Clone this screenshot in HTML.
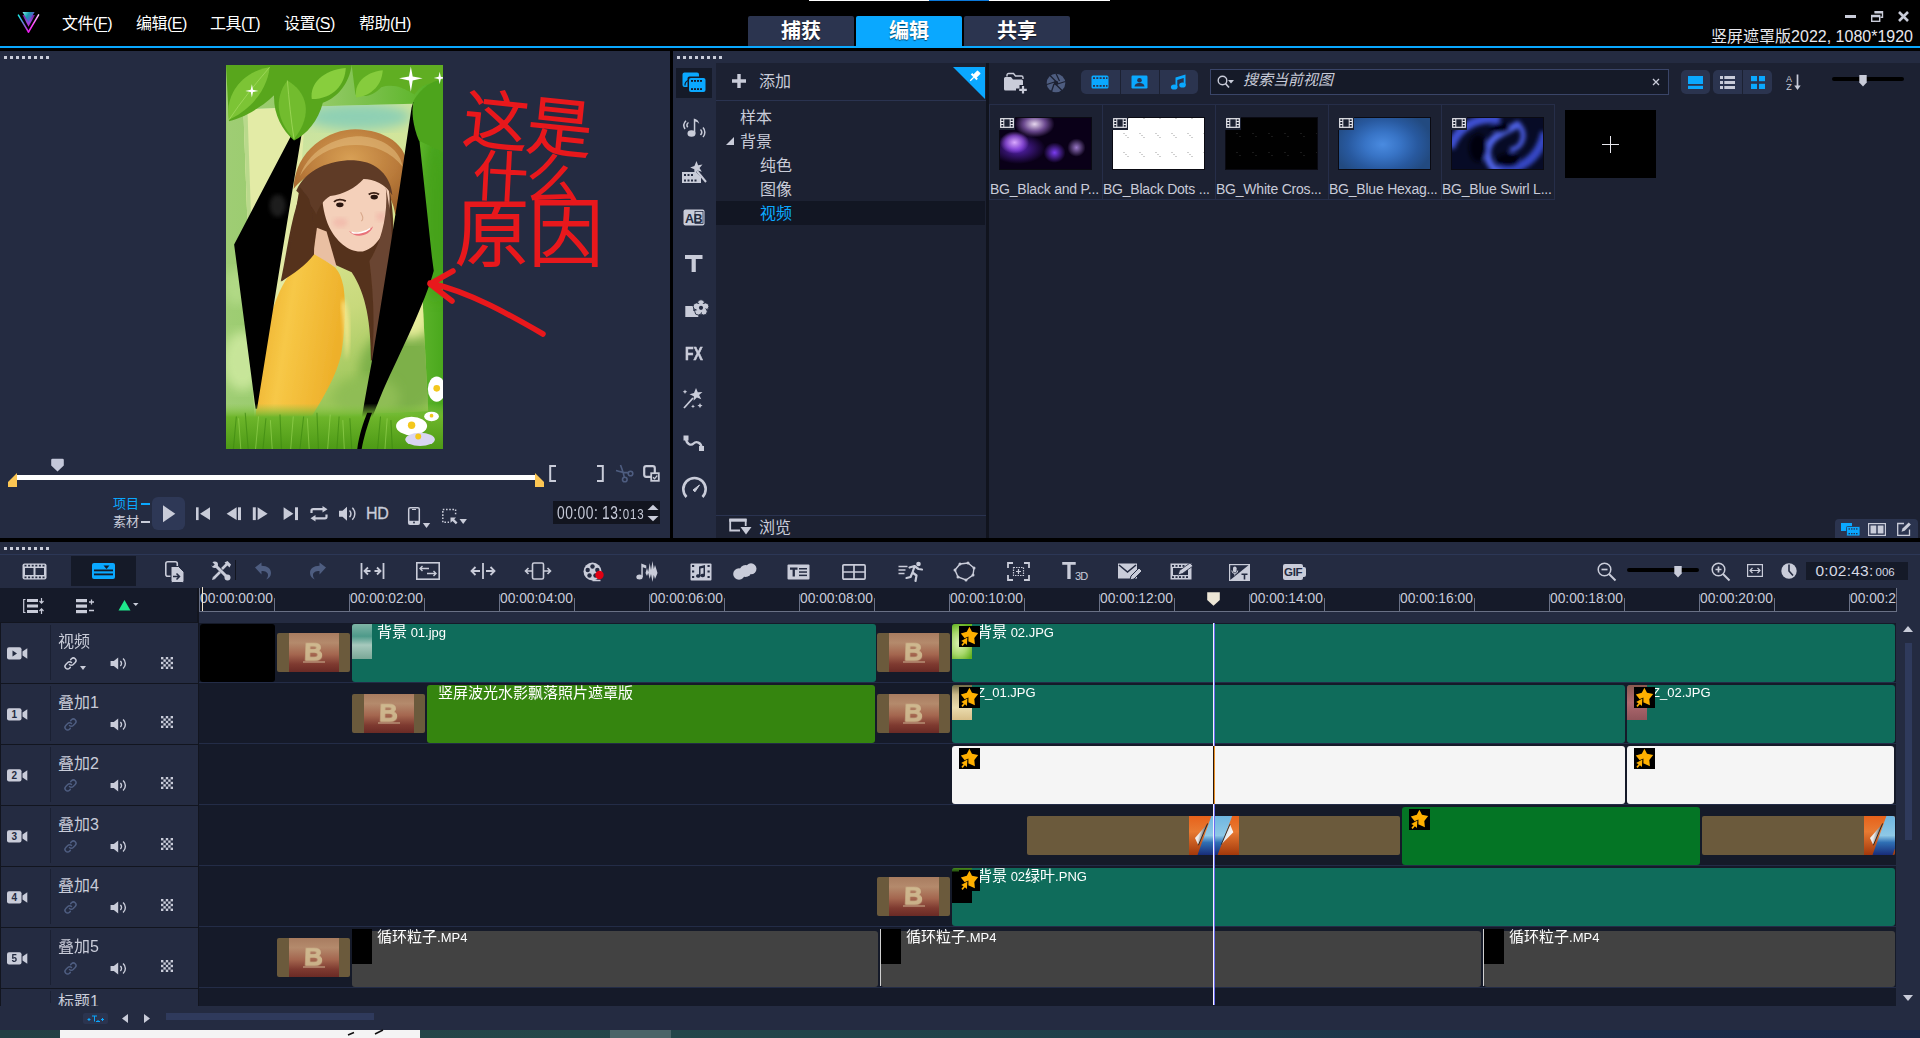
<!DOCTYPE html>
<html lang="zh-CN">
<head>
<meta charset="utf-8">
<title>竖屏遮罩版2022</title>
<style>
*{box-sizing:border-box;margin:0;padding:0}
html,body{width:1920px;height:1038px;overflow:hidden;background:#000}
body{font-family:"Liberation Sans","Noto Sans CJK SC",sans-serif;color:#c9ccd9;font-size:16px;position:relative}
#app div,#app>svg,#app div>svg{position:absolute}
#app{position:absolute;left:0;top:0;width:1920px;height:1038px;overflow:hidden;background:#000}
.t{white-space:nowrap;line-height:1}
svg{overflow:visible}
/* top bar */
#topbar{left:0;top:0;width:1920px;height:46px;background:#000}
#blueline{left:0;top:46px;width:1920px;height:2px;background:#0aa8ff}
.menu{top:15px;letter-spacing:-0.500px;font-size:16px;color:#fff;line-height:18px;white-space:nowrap}
.menu u{text-decoration:underline;text-underline-offset:2px}
.tab{top:16px;height:30px;width:106px;background:#2b344f;border-radius:2px 2px 0 0;color:#fff;font-weight:bold;font-size:20px;line-height:31px;text-align:center;text-shadow:0 1px 1px rgba(0,0,0,.6)}
.tab.on{background:#0aa8ff}
/* panels */
#preview{left:0;top:51px;width:670px;height:487px;background:#242b41}
#lib{left:674px;top:51px;width:1246px;height:487px;background:#242b41;box-shadow:-1px 0 0 #242b41}
#tree{left:42px;top:12px;width:270px;height:475px;background:#1c2132}
#media{left:315px;top:12px;width:931px;height:475px;background:#1c2132}
.dots{height:3px;width:45px;background:repeating-linear-gradient(90deg,#c9ccd9 0 3px,transparent 3px 6px)}
.treerow{left:0;width:270px;height:24px;font-size:16px;line-height:24px;color:#c9ccd9;white-space:nowrap}
/* timeline */
#tl{left:0;top:542px;width:1920px;height:488px;background:#242b41}
#tracks{left:199px;top:47px;width:1697px;height:417px;background:#151a29}
#ruler{left:199px;top:47px;width:1697px;height:34px;background:#1c2132}
.hdr{left:2px;width:196px;height:59px;background:#242b41}
.hdr .ic{left:0;top:0;width:47px;height:59px;border-right:1px solid #1b2133}
.hdr .nm{left:57px;top:9px;font-size:15px;line-height:16px;color:#c9ccd9;white-space:nowrap}
.trk{left:0;width:1697px;height:61px;border-top:1px solid #232b45}
.clip{border-radius:3px;overflow:hidden;color:#fff;font-size:14px;white-space:nowrap}
.clip .lb{top:-0.500px;line-height:16px;font-size:13px;color:#fff}.lb .c{font-size:15px}
.teal{background:#0f6c5b}
.grn{background:#35850f}
.grn2{background:#047525}
.wht{background:#f5f5f5}
.gry{background:#424242}
.brn{background:#6b5a3c}
.blk{background:#000}
.star{width:22px;height:22px;background:#000}

.th{overflow:hidden}
.t1{background:radial-gradient(ellipse 16% 22% at 16% 48%,#d9a8ff 0,rgba(160,90,240,.7) 60%,rgba(120,60,220,0) 100%),radial-gradient(ellipse 22% 26% at 38% 12%,#e6d6ee 0,rgba(170,120,220,.6) 55%,rgba(150,90,210,0) 100%),radial-gradient(ellipse 12% 20% at 60% 68%,#7a3cf0 0,rgba(90,40,200,0) 100%),radial-gradient(ellipse 10% 18% at 84% 58%,#9a78c8 0,rgba(80,40,180,0) 100%),radial-gradient(ellipse 30% 30% at 20% 60%,#5a24b8 0,rgba(60,20,150,0) 100%),#0a0018;border:1px solid #0a0a12}
.t2{background-color:#fff;background-image:radial-gradient(circle,#cfcfcf 0.5px,transparent 0.8px),radial-gradient(circle,#cfcfcf 0.5px,transparent 0.8px),radial-gradient(circle,#cfcfcf 0.5px,transparent 0.8px);background-size:16px 19px,16px 19px,16px 19px;background-position:3px 6px,5px 8px,7px 10px;border:1px solid #0a0a12}
.t3{background-color:#010101;background-image:radial-gradient(circle,#1a1a1a 0.5px,transparent 0.8px),radial-gradient(circle,#1a1a1a 0.5px,transparent 0.8px);background-size:16px 19px,16px 19px;background-position:3px 6px,6px 9px;border:1px solid #0a0a12}
.t4{background:radial-gradient(ellipse 55% 70% at 48% 52%,#4a8be0 0,#3874c6 35%,#28599f 70%,#224a80 100%);border:1px solid #0a0a12}
.t5{background:#060a22;border:1px solid #0a0a12}
</style>
</head>
<body>
<div id="app">
<!--TOPBAR-->
<div id="topbar">
<div style="left:809px;top:0;width:301px;height:1px;background:#fff"></div>
<div style="left:929px;top:0;width:60px;height:1px;background:#0a78d8"></div>
<svg style="left:17px;top:11px" width="23" height="23" viewBox="0 0 23 23">
<defs><linearGradient id="lg1" x1="0" y1="0" x2="1" y2="0.600"><stop offset="0" stop-color="#7ff2f0"/><stop offset=".45" stop-color="#169aa8"/><stop offset="1" stop-color="#8a2ee6"/></linearGradient>
<linearGradient id="lg2" x1="0" y1="0" x2="0" y2="1"><stop offset="0" stop-color="#7a1a9a"/><stop offset=".6" stop-color="#9048e0"/><stop offset="1" stop-color="#c020d0"/></linearGradient>
<linearGradient id="lg3" x1="0" y1="0" x2="0" y2="1"><stop offset="0" stop-color="#18f0e8"/><stop offset=".55" stop-color="#7a6ad8"/><stop offset="1" stop-color="#f018f0"/></linearGradient>
<linearGradient id="lg4" x1="0" y1="0" x2="0" y2="1"><stop offset="0" stop-color="#ffd0ff"/><stop offset=".5" stop-color="#ff50ff"/><stop offset="1" stop-color="#f018f0"/></linearGradient></defs>
<path d="M5.500 4.100L18 4.100L11.500 15.800Z" fill="url(#lg2)"/>
<path d="M5.500 1.100L17.600 1.100L11.500 11.600Z" fill="url(#lg1)"/>
<path d="M1.400 4.100L11.500 21" stroke="url(#lg3)" stroke-width="1.500" fill="none" stroke-linecap="round"/>
<path d="M21.600 3.900L11.500 21" stroke="url(#lg4)" stroke-width="1.500" fill="none" stroke-linecap="round"/>
</svg>
<div class="menu" style="left:62px">文件(<u>F</u>)</div>
<div class="menu" style="left:136px">编辑(<u>E</u>)</div>
<div class="menu" style="left:210px">工具(<u>T</u>)</div>
<div class="menu" style="left:284px">设置(<u>S</u>)</div>
<div class="menu" style="left:359px">帮助(<u>H</u>)</div>
<div class="tab" style="left:748px">捕获</div>
<div class="tab on" style="left:856px">编辑</div>
<div class="tab" style="left:964px">共享</div>
<div style="left:1845px;top:15px;width:11px;height:3px;background:#c9ccd9"></div>
<svg style="left:1871px;top:11px" width="12" height="11" viewBox="0 0 12 11"><path d="M3.5 0.8h8v5.5h-2" fill="none" stroke="#c9ccd9" stroke-width="1.4"/><path d="M3.5 1.5h8" stroke="#c9ccd9" stroke-width="2"/><rect x="0.7" y="4.5" width="8" height="5.8" fill="#000" stroke="#c9ccd9" stroke-width="1.4"/><path d="M0.7 5.3h8" stroke="#c9ccd9" stroke-width="2"/></svg>
<svg style="left:1898px;top:11px" width="11" height="11" viewBox="0 0 11 11"><path d="M1 1L10 10M10 1L1 10" stroke="#c9ccd9" stroke-width="2.6"/></svg>
<div class="t" style="right:7px;top:28px;font-size:16px;line-height:17px;color:#e8e8ee">竖屏遮罩版2022, 1080*1920</div>
</div>
<div id="blueline"></div>
<!--PREVIEW-->
<div id="preview">
<div class="dots" style="left:4px;top:5px"></div>
<svg style="left:226px;top:14px;overflow:hidden" width="217" height="384" viewBox="0 0 587 1038" preserveAspectRatio="none">
<defs>
<linearGradient id="pbg" x1="0" y1="0" x2="1" y2="0"><stop offset="0" stop-color="#9fcd74"/><stop offset=".45" stop-color="#93ca66"/><stop offset=".86" stop-color="#62b730"/><stop offset="1" stop-color="#4aa81d"/></linearGradient>
<linearGradient id="pph" x1="0" y1="0" x2="0.250" y2="1"><stop offset="0" stop-color="#9fd6b0"/><stop offset=".16" stop-color="#c9e3a0"/><stop offset=".45" stop-color="#dde795"/><stop offset=".75" stop-color="#c8d97c"/><stop offset="1" stop-color="#9cc65a"/></linearGradient>
<linearGradient id="pgr" x1="0" y1="0" x2="0" y2="1"><stop offset="0" stop-color="#8bc84a" stop-opacity="0"/><stop offset=".3" stop-color="#6db52a"/><stop offset="1" stop-color="#4d9a16"/></linearGradient>
<linearGradient id="psh" x1="0" y1="0" x2="1" y2="0.300"><stop offset="0" stop-color="#e9a825"/><stop offset=".45" stop-color="#f7c847"/><stop offset="1" stop-color="#eeb02a"/></linearGradient>
<radialGradient id="phat" cx=".5" cy=".35" r=".7"><stop offset="0" stop-color="#d8a055"/><stop offset=".6" stop-color="#b97a3a"/><stop offset="1" stop-color="#9a5e28"/></radialGradient>
<filter id="b6"><feGaussianBlur stdDeviation="6"/></filter>
<filter id="b3"><feGaussianBlur stdDeviation="2"/></filter>
<filter id="b12"><feGaussianBlur stdDeviation="14"/></filter>
<clipPath id="pcl"><polygon points="47,120 230,112 505,105 547,936 77,954"/></clipPath>
</defs>
<rect width="587" height="1038" fill="url(#pbg)"/>
<ellipse cx="45" cy="800" rx="55" ry="80" fill="#cfeaa0" filter="url(#b12)" opacity=".85"/>
<ellipse cx="30" cy="600" rx="40" ry="50" fill="#b6dc8a" filter="url(#b12)" opacity=".8"/>
<ellipse cx="565" cy="420" rx="40" ry="220" fill="#3f9c14" filter="url(#b12)" opacity=".6"/>
<polygon points="47,120 230,112 505,105 547,936 77,954" fill="url(#pph)"/>
<polygon points="47,120 215,113 160,952 77,954" fill="#e3eba6"/>
<polygon points="47,120 58,120 86,953 77,954" fill="#b9d98c"/>
<g clip-path="url(#pcl)">
<ellipse cx="470" cy="830" rx="110" ry="120" fill="#7db048" filter="url(#b12)"/>
<ellipse cx="380" cy="900" rx="90" ry="60" fill="#8fbd55" filter="url(#b12)"/>
<ellipse cx="500" cy="650" rx="60" ry="90" fill="#e6ec9a" filter="url(#b12)"/>
<ellipse cx="360" cy="140" rx="140" ry="35" fill="#8fd0b4" filter="url(#b12)"/>
<!-- hat -->
<path d="M183,335 C186,228 280,174 350,174 C430,176 492,215 490,280 C488,340 474,375 458,405 C450,345 402,280 330,274 C268,270 212,296 183,335Z" fill="url(#phat)" filter="url(#b3)"/>
<path d="M200,300 C230,215 320,190 370,193 C430,200 470,230 478,275 C440,225 380,210 320,218 C262,228 222,262 200,300Z" fill="#e6c080" opacity=".55" filter="url(#b3)"/>
<!-- hair back -->
<path d="M222,315 C262,262 400,258 440,330 C462,420 452,540 440,640 C432,720 412,780 392,800 C392,700 380,620 340,560 L250,520 C215,540 180,560 148,585 C168,490 178,385 222,300Z" fill="#54321f" filter="url(#b3)"/>
<!-- shirt -->
<path d="M236,505 C195,525 150,580 120,680 C100,770 88,870 80,952 L232,950 C262,900 300,840 312,780 C322,720 325,650 318,600 C312,570 305,560 296,548Z" fill="url(#psh)" filter="url(#b3)"/>
<path d="M318,630 C335,660 340,740 325,800 C322,740 318,690 312,650Z" fill="#f8e98c" opacity=".9" filter="url(#b6)"/>
<!-- neck/face -->
<path d="M272,450 L300,548 L236,510 L246,440Z" fill="#e9bfa2"/>
<g transform="translate(24,-2)">
<path d="M236,345 C236,296 285,264 345,270 C400,280 424,322 418,384 C414,444 388,496 346,506 C310,510 275,480 255,440 C242,410 236,380 236,345Z" fill="#f4d0ba" filter="url(#b3)"/>
<ellipse cx="285" cy="428" rx="20" ry="13" fill="#f0a8a0" opacity=".45" filter="url(#b6)"/>
<ellipse cx="395" cy="412" rx="14" ry="12" fill="#f0a8a0" opacity=".45" filter="url(#b6)"/>
<path d="M268,372c8,-8 22,-8 32,-2M362,352c8,-6 20,-6 28,0" stroke="#3a1f14" stroke-width="5" fill="none"/>
<ellipse cx="284" cy="380" rx="10" ry="6.500" fill="#2a1610"/><ellipse cx="377" cy="359" rx="10" ry="6.500" fill="#2a1610"/>
<path d="M340,400c5,10 10,18 2,24" stroke="#d9a98c" stroke-width="3" fill="none"/>
<path d="M308,450c16,12 48,6 66,-12c-8,26 -48,36 -66,12z" fill="#e8737a"/>
<path d="M316,454c14,6 38,0 50,-10" stroke="#fff" stroke-width="4" fill="none"/>
</g>
<ellipse cx="208" cy="395" rx="14" ry="25" fill="#eab697" filter="url(#b3)"/>
<!-- hair front -->
<path d="M190,340 C218,276 295,254 352,258 C408,262 446,300 450,352 C432,322 400,308 372,308 C350,332 318,350 282,354 C262,366 250,386 244,404 C236,384 214,362 190,340Z" fill="#5e3b26" filter="url(#b3)"/>
<path d="M224,360 C236,400 240,450 238,512 C215,542 185,562 150,585 C180,500 185,400 200,330Z" fill="#54321f" filter="url(#b3)"/>
<path d="M432,330 C456,440 452,560 438,660 C430,720 410,790 394,800 C404,700 398,610 388,530 C420,480 440,400 432,330Z" fill="#6a4430" filter="url(#b3)"/>
</g>
<!-- black shards -->
<polygon points="186,172 22,485 80,929 84,929 150,519 207,172" fill="#000"/>
<polygon points="220,0 229,0 214,70 208,70" fill="#000"/>
<path d="M507,100 L512,100 L557,519 L562,556 C540,640 470,780 425,879 C400,940 380,990 367,1038 L355,1038 C362,980 380,880 395,799 C408,720 425,610 440,519 L470,330 L502,115Z" fill="#000"/>
<ellipse cx="140" cy="380" rx="22" ry="30" fill="#3a3a3a" opacity=".5" filter="url(#b6)"/>
<!-- grass -->
<rect x="0" y="915" width="587" height="123" fill="url(#pgr)"/>
<g stroke="#3f8a12" stroke-width="3" opacity=".7"><path d="M20,1038L28,950M60,1038L52,940M100,1038L108,955M150,1038L146,945M200,1038L210,950M250,1038L246,940M300,1038L306,950M340,1038L335,955M410,1038L418,950M450,1038L446,960"/></g>
<g stroke="#a6e060" stroke-width="2" opacity=".7"><path d="M40,1038L34,955M80,1038L88,950M125,1038L120,960M175,1038L182,950M225,1038L220,955M275,1038L282,945M320,1038L316,960M430,1038L436,955"/></g>
<path d="M395,940 C382,975 372,1010 367,1038 L355,1038 C360,1000 372,965 382,940Z" fill="#000"/>
<!-- leaves -->
<g filter="url(#b3)">
<path d="M0,0 L340,0 C335,40 310,85 262,102 C250,150 218,188 184,204 C150,175 128,130 130,82 C100,112 50,142 8,152 Z" fill="#58a61e"/>
<path d="M8,148 C-4,84 40,18 118,6 C112,62 74,116 8,148Z" fill="#7cc436"/>
<path d="M8,148 C40,100 80,50 118,6" stroke="#a6dc60" stroke-width="2" fill="none"/>
<path d="M184,200 C138,152 128,92 166,42 C218,72 238,132 184,200Z" fill="#72bc2e"/>
<path d="M184,200 C176,150 170,90 166,42" stroke="#a6dc60" stroke-width="2" fill="none"/>
<path d="M232,92 C226,50 262,14 324,8 C322,52 290,92 232,92Z" fill="#88ce3e"/>
<path d="M340,0 L587,0 L587,60 C560,40 530,50 510,80 C480,60 450,50 420,60 C400,80 380,90 350,80 Z" fill="#60ae24"/>
<path d="M352,88 C346,52 372,20 424,14 C422,52 396,82 352,88Z" fill="#86cc3c"/>
<path d="M508,95 C500,125 506,165 522,205 L587,235 L587,40 C560,40 528,62 508,95Z" fill="#4ea41c"/>
</g>
<path d="M500,4L505,31L532,36L505,42L500,72L495,42L468,36L495,31Z" fill="#fff"/>
<path d="M578,18L581,32L594,35L581,38L578,52L575,38L562,35L575,32Z" fill="#fff"/>
<path d="M70,52L73,67L88,70L73,73L70,88L67,73L52,70L67,67Z" fill="#fff"/>
<!-- daisies -->
<g fill="#fff"><ellipse cx="570" cy="876" rx="24" ry="34"/><ellipse cx="502" cy="976" rx="42" ry="25"/><ellipse cx="556" cy="950" rx="20" ry="13"/><ellipse cx="525" cy="1012" rx="40" ry="18" fill="#d9d6f2"/></g>
<g fill="#f3c71c"><circle cx="570" cy="874" r="9"/><circle cx="502" cy="974" r="10"/><circle cx="556" cy="948" r="5"/><circle cx="520" cy="1004" r="8"/></g>
</svg>
<svg style="left:0;top:0" width="669" height="487" viewBox="0 51 669 487"><path d="M430,283 C470,292 510,315 543,334 M453,271 L430,284 L452,301" fill="none" stroke="#e8181c" stroke-width="5.500" stroke-linecap="round" stroke-linejoin="round"/></svg>
<div class="t" style="left:468px;top:30px;font-size:64px;line-height:64px;color:#e8181c;font-family:'Noto Sans CJK SC',sans-serif;font-weight:300;-webkit-text-stroke:2.200px #e8181c;stroke-linejoin:round;transform-origin:0 0;transform:rotate(6deg)">这是</div>
<div class="t" style="left:475px;top:94px;font-size:54px;line-height:54px;color:#e8181c;font-family:'Noto Sans CJK SC',sans-serif;font-weight:300;-webkit-text-stroke:2.200px #e8181c;stroke-linejoin:round;transform-origin:0 0;transform:rotate(3deg)">什么</div>
<div class="t" style="left:455px;top:140px;font-size:74px;line-height:74px;color:#e8181c;font-family:'Noto Sans CJK SC',sans-serif;font-weight:300;-webkit-text-stroke:2.200px #e8181c;stroke-linejoin:round">原因</div>

<div style="left:16px;top:424px;width:520px;height:5px;background:#fff"></div>
<svg style="left:8px;top:422px" width="10" height="14" viewBox="0 0 10 14"><path d="M9 0V14H0V9Z" fill="#fcc653"/></svg>
<svg style="left:535px;top:422px" width="10" height="14" viewBox="0 0 10 14"><path d="M0 0V14H9V9Z" fill="#fcc653"/></svg>
<svg style="left:51px;top:407px" width="13" height="14" viewBox="0 0 13 14"><path d="M1.500 0.800h10a1.300 1.300 0 0 1 1.300 1.300v5.400l-6.300 6l-6.300-6v-5.400a1.300 1.300 0 0 1 1.300-1.300z" fill="#c4c8da"/></svg>
<svg style="left:549px;top:414px" width="8" height="17" viewBox="0 0 8 17"><path d="M7 1H1.200V16H7" fill="none" stroke="#c9ccd9" stroke-width="2"/></svg>
<svg style="left:596px;top:414px" width="8" height="17" viewBox="0 0 8 17"><path d="M1 1H6.800V16H1" fill="none" stroke="#c9ccd9" stroke-width="2"/></svg>
<svg style="left:615px;top:413px" width="19" height="19" viewBox="0 0 19 19"><g fill="none" stroke="#4e5d80" stroke-width="1.600"><path d="M5.500 1C7 5 8.500 9 9.300 13.300M1 6.500C5 7.500 9 9 13 8.600"/><circle cx="9.800" cy="15.500" r="2.300"/><circle cx="15.500" cy="9.500" r="2.300"/></g></svg>
<svg style="left:643px;top:414px" width="17" height="17" viewBox="0 0 17 17"><rect x="1.200" y="1.200" width="10.600" height="10.600" rx="2" fill="none" stroke="#c9ccd9" stroke-width="2.200"/><rect x="8.200" y="8.200" width="7.600" height="7.600" fill="#242b41" stroke="#c9ccd9" stroke-width="1.800"/><path d="M10 12.300l1.500 1.500l2.800-3.300" stroke="#c9ccd9" stroke-width="1.300" fill="none"/></svg>
<div class="t" style="left:113px;top:446px;font-size:13px;line-height:14px;color:#0aa8ff">项目</div>
<div style="left:141px;top:452px;width:9px;height:2px;background:#0aa8ff"></div>
<div class="t" style="left:113px;top:464px;font-size:13px;line-height:14px;color:#c9ccd9">素材</div>
<div style="left:141px;top:470px;width:9px;height:2px;background:#c9ccd9"></div>
<div style="left:152px;top:446px;width:33px;height:33px;border-radius:6px;background:#2e3856"></div>
<svg style="left:152px;top:446px" width="320" height="40" viewBox="152 497 320 40" fill="#c9ccd9">
<path d="M163 505.300V522.300L175.300 513.800Z"/>
<rect x="196" y="507.300" width="2.600" height="12.800"/><path d="M210 507.300V520.100L200 513.700Z"/>
<path d="M236.600 507.300V520.100L226.600 513.700Z"/><rect x="238" y="507.300" width="3" height="12.800"/>
<rect x="252.800" y="507.300" width="3" height="12.800"/><path d="M257.600 507.300V520.100L267.600 513.700Z"/>
<path d="M283.600 507.300V520.100L293.400 513.700Z"/><rect x="295" y="507.300" width="3" height="12.800"/>
<g fill="none" stroke="#c9ccd9" stroke-width="2.200"><path d="M311.500 513v-2.200a1.600 1.600 0 0 1 1.600-1.600h10"/><path d="M326.500 514.500v2.200a1.600 1.600 0 0 1-1.600 1.600h-10"/></g>
<path d="M322.500 506l5 3.200l-5 3.200z"/><path d="M315.500 515.100l-5 3.200l5 3.200z"/>
<path d="M339 510.800h3.500l4.500-4v14l-4.500-4h-3.500z"/>
<g fill="none" stroke="#c9ccd9" stroke-width="1.500"><path d="M349.500 510.500a4.500 4.500 0 0 1 0 6.600"/><path d="M352.300 507.800a8.300 8.300 0 0 1 0 12"/></g>
<rect x="408.700" y="507.700" width="10.600" height="16.600" rx="1.500" fill="none" stroke="#c9ccd9" stroke-width="1.500"/><rect x="408.700" y="520.800" width="10.600" height="3.500"/><rect x="412" y="509" width="4" height="1"/><circle cx="414" cy="522.500" r="0.900" fill="#242b41"/>
<path d="M422.800 523h7.400l-3.700 5z"/>
<rect x="442.800" y="509.500" width="12.800" height="12.800" fill="none" stroke="#c9ccd9" stroke-width="1.500" stroke-dasharray="1.600 1.600"/>
<rect x="449" y="516" width="9" height="9" fill="#242b41"/><path d="M450.500 517.500h5.500l-1.800 1.800l3.300 3.300l-1.700 1.700l-3.300-3.300l-2 1.800z"/>
<path d="M459.500 519h7.400l-3.700 5z"/>
</svg>
<div class="t" style="left:366px;top:455px;font-size:16px;line-height:16px;color:#c9ccd9;letter-spacing:-0.3px;-webkit-text-stroke:0.3px #c9ccd9">HD</div>
<div style="left:553px;top:450px;width:107px;height:23px;background:#12151f"></div>
<div class="t" style="left:556.500px;top:453px;font-size:18px;line-height:18px;color:#c6cad8;letter-spacing:0.600px;transform-origin:0 0;transform:scaleX(0.768)">00:00:<span style="margin-left:5px">13:</span><span style="font-size:15px;letter-spacing:1.200px">013</span></div>
<svg style="left:647px;top:453px" width="12" height="18" viewBox="0 0 12 18" fill="#c9ccd9"><path d="M0.500 6L6 0.800L11.500 6Z"/><path d="M0.500 12L6 17.200L11.500 12Z"/></svg>
</div>
<!--LIB-->
<div id="lib">
<div class="dots" style="left:3px;top:5px"></div>
<div style="left:2px;top:17px;width:36px;height:30px;background:#151a28"></div><svg style="left:8px;top:21px" width="24" height="21" viewBox="0 0 24 21"><path d="M2.500 0.500h12.500a2 2 0 0 1 2 2v2h-9.500a2 2 0 0 0-2 2v8.500h-3a2 2 0 0 1-2-2v-10.500a2 2 0 0 1 2-2z" fill="#0aa8ff"/><path d="M3 13.500a5 5 0 0 1 3-5" stroke="#151a28" stroke-width="1.200" fill="none"/><rect x="7" y="6" width="16.500" height="14" rx="2" fill="#0aa8ff"/><g fill="#151a28"><rect x="9" y="8" width="2" height="1.800"/><rect x="12" y="8" width="2" height="1.800"/><rect x="15" y="8" width="2" height="1.800"/><rect x="18" y="8" width="2" height="1.800"/><rect x="9" y="16.200" width="2" height="1.800"/><rect x="12" y="16.200" width="2" height="1.800"/><rect x="15" y="16.200" width="2" height="1.800"/><rect x="18" y="16.200" width="2" height="1.800"/></g></svg><svg style="left:7px;top:64px" width="26" height="26" viewBox="0 0 26 26" fill="#c9ccd9"><ellipse cx="10.500" cy="18.500" rx="4" ry="3.300"/><path d="M12.800 18.500V3.500c3 0.500 5 2.500 5.500 5.500c-1.500-1.800-3-2.500-4-2.500v12z"/><g fill="none" stroke="#c9ccd9" stroke-width="1.500"><path d="M7.500 7.500a3.500 3.500 0 0 0 -0.800 4.800M5 5.800a6.500 6.500 0 0 0 -1 8.200M19.500 14.500a4 4 0 0 1 0 5.500M22 12.500a7 7 0 0 1 0 9.500"/></g></svg><svg style="left:7px;top:109px" width="26" height="26" viewBox="0 0 26 26" fill="#c9ccd9"><path d="M1 12h14l5 5v6H1z"/><g fill="#242b41"><rect x="3" y="14" width="2" height="2"/><rect x="6.500" y="14" width="2" height="2"/><rect x="10" y="14" width="2" height="2"/><rect x="3" y="19.500" width="2" height="2"/><rect x="6.500" y="19.500" width="2" height="2"/><rect x="10" y="19.500" width="2" height="2"/><rect x="13.500" y="19.500" width="2" height="2"/></g><path d="M15.500 1l1.600 4.200l4.400-0.600l-3 3.300l2.300 3.900l-4.300-1.300l-3 3.300l-0.200-4.500l-4.100-1.800l4.200-1.500z"/><path d="M16 11l9 11" stroke="#c9ccd9" stroke-width="2"/></svg><svg style="left:9px;top:158px" width="22" height="17" viewBox="0 0 22 17"><rect x="0.500" y="0.500" width="21" height="16" rx="2" fill="#c9ccd9"/><text x="2" y="13.500" font-family="Liberation Sans" font-weight="bold" font-size="12.500" fill="#242b41" letter-spacing="-0.500">AB</text><rect x="12" y="2.500" width="8" height="12" fill="none" stroke="#242b41" stroke-width="0.800"/></svg><svg style="left:10px;top:203px" width="20" height="19" viewBox="0 0 20 19" fill="#c9ccd9"><path d="M1 1h17.500v4h-6.700v13h-4.200v-13h-6.600z"/></svg><svg style="left:10.500px;top:247.500px" width="24" height="19" viewBox="0 0 24 19" fill="#c9ccd9"><path d="M0.300 7h8v5h5v6h-13z"/><g stroke="#242b41" stroke-width="0.900"><circle cx="16.00" cy="4.20" r="3.500"/><circle cx="20.37" cy="7.38" r="3.500"/><circle cx="18.70" cy="12.52" r="3.500"/><circle cx="13.30" cy="12.52" r="3.500"/><circle cx="11.63" cy="7.38" r="3.500"/></g><circle cx="16" cy="8.800" r="4.600"/><circle cx="16" cy="8.800" r="2.100" fill="#242b41"/></svg><div class="t" style="left:10.500px;top:293.500px;font-size:17.500px;line-height:18px;font-weight:bold;color:#c9ccd9;-webkit-text-stroke:0.500px #c9ccd9;transform-origin:0 0;transform:scaleX(0.800)">FX</div><svg style="left:7px;top:334px" width="26" height="26" viewBox="0 0 26 26" fill="#c9ccd9"><path d="M15 3l1.800 4.300l4.700-0.400l-3.400 3.200l2.200 4.100l-4.400-1.700l-3.300 3.300l0.200-4.600l-4.300-2l4.500-1.300z"/><path d="M12 13l-9 10" stroke="#c9ccd9" stroke-width="1.800"/><path d="M4 4.500l0.700 1.600l1.600 0.700l-1.600 0.700l-0.700 1.600l-0.700-1.600l-1.600-0.700l1.600-0.700z"/><path d="M19 18l0.800 1.800l1.800 0.800l-1.800 0.800l-0.800 1.800l-0.800-1.800l-1.800-0.800l1.800-0.800z"/><path d="M12 19.500l0.600 1.300l1.300 0.600l-1.300 0.600l-0.600 1.300l-0.600-1.300l-1.300-0.600l1.300-0.600z"/></svg><svg style="left:9px;top:384px" width="22" height="17" viewBox="0 0 22 17"><path d="M3 3C3 9 8 11 10.500 8.500C13 6 18.500 7 18.500 13" fill="none" stroke="#c9ccd9" stroke-width="2.400"/><rect x="0.500" y="0.500" width="5" height="5" fill="#c9ccd9"/><rect x="16" y="11" width="5" height="5" fill="#c9ccd9"/></svg><svg style="left:7px;top:425px" width="27" height="23" viewBox="0 0 27 23"><path d="M5.500 21a11.200 11.200 0 1 1 16 0" fill="none" stroke="#c9ccd9" stroke-width="2.600"/><path d="M12 14l6.500-5l-4.500 6.800z" fill="#c9ccd9" stroke="#c9ccd9" stroke-width="1"/></svg>
<div id="tree">
<svg style="left:15px;top:10px" width="16" height="16" viewBox="0 0 16 16"><path d="M8 1v14M1 8h14" stroke="#c9ccd9" stroke-width="3.400"/></svg>
<div class="t" style="left:43px;top:10px;font-size:16px;line-height:17px;color:#c9ccd9">添加</div>
<svg style="left:237px;top:4px" width="32" height="32" viewBox="0 0 32 32"><path d="M0 0H32V32Z" fill="#0aa8ff"/><g transform="translate(21.500 9.500) rotate(45)" fill="#fff"><rect x="-2.300" y="-6.500" width="4.600" height="6.500" rx="0.600"/><rect x="-4" y="-0.800" width="8" height="2"/><rect x="-0.600" y="1" width="1.200" height="5"/></g></svg>
<div style="left:0;top:37px;width:270px;height:1px;background:#2a3350"></div>
<div class="treerow" style="top:43px;padding-left:24px">样本</div>
<svg style="left:10px;top:74px" width="8" height="8" viewBox="0 0 8 8"><path d="M8 0V8H0Z" fill="#c9ccd9"/></svg>
<div class="treerow" style="top:67px;padding-left:24px">背景</div>
<div class="treerow" style="top:91px;padding-left:44px">纯色</div>
<div class="treerow" style="top:115px;padding-left:44px">图像</div>
<div class="treerow" style="top:138px;height:24px;line-height:26.500px;background:#121623;width:269px;padding-left:44px;color:#0aa8ff">视频</div>
<div style="left:0;top:452px;width:270px;height:1px;background:#2a3350"></div>
<svg style="left:13px;top:455px" width="23" height="17" viewBox="0 0 23 17"><path d="M11 12.500H1.200V2h15.500v6" fill="none" stroke="#c9ccd9" stroke-width="1.800"/><rect x="0.300" y="0.500" width="17.300" height="3.200" fill="#c9ccd9"/><path d="M11.500 9h11l-5.500 7.500z" fill="#c9ccd9"/></svg>
<div class="t" style="left:43px;top:456px;font-size:16px;line-height:17px;color:#c9ccd9">浏览</div>
</div>
<div style="left:312px;top:12px;width:3px;height:475px;background:#10131d"></div>
<div id="media">
<svg style="left:15px;top:10px" width="24" height="21" viewBox="0 0 24 21"><path d="M3 3.500v-1.500a1.500 1.500 0 0 1 1.500-1.500h5l2 2.500h6a1.500 1.500 0 0 1 1.500 1.500v1.500" fill="none" stroke="#c9ccd9" stroke-width="1.400"/><path d="M1.500 4h5.500l2 2.500h8.500a1.500 1.500 0 0 1 1.500 1.500v4h-3.500v3.500h-3.500v2h-10.500a1.500 1.500 0 0 1-1.500-1.500v-10.500a1.500 1.500 0 0 1 1.500-1.500z" fill="#c9ccd9"/><path d="M19 13v7.500M15.200 16.800h7.600" stroke="#c9ccd9" stroke-width="2.200"/></svg><svg style="left:57px;top:10px" width="20" height="20" viewBox="0 0 20 20"><circle cx="10" cy="10" r="9.300" fill="#4e5d80"/><g stroke="#1c2132" stroke-width="1.300" fill="none"><path d="M10 0.500L13.500 8M19.400 8.500L11.500 11M16 17.500L10 11.500M5.500 18.500L8 11M0.800 11.500L8.500 9M4 2.500L10 8.500"/></g><circle cx="10" cy="10" r="2.300" fill="#1c2132"/></svg><div style="left:92px;top:7px;width:117px;height:24px;border-radius:5px;background:#2b344f"></div><div style="left:131px;top:7px;width:1px;height:24px;background:#1c2132"></div><div style="left:170px;top:7px;width:1px;height:24px;background:#1c2132"></div><svg style="left:102px;top:12px" width="18" height="14" viewBox="0 0 18 14"><rect x="0.500" y="0.500" width="17" height="13" rx="1.500" fill="#0aa8ff"/><g fill="#2b344f"><rect x="2" y="2.200" width="2" height="1.800"/><rect x="5.300" y="2.200" width="2" height="1.800"/><rect x="8.600" y="2.200" width="2" height="1.800"/><rect x="11.900" y="2.200" width="2" height="1.800"/><rect x="2" y="10" width="2" height="1.800"/><rect x="5.300" y="10" width="2" height="1.800"/><rect x="8.600" y="10" width="2" height="1.800"/><rect x="11.900" y="10" width="2" height="1.800"/><rect x="15" y="2.200" width="1.500" height="1.800"/><rect x="15" y="10" width="1.500" height="1.800"/></g></svg><svg style="left:142px;top:12px" width="17" height="14" viewBox="0 0 17 14"><rect x="0.500" y="0.500" width="16" height="13" rx="1.200" fill="#0aa8ff"/><circle cx="8.500" cy="5.200" r="2.300" fill="#2b344f"/><path d="M3.500 11.500c0.500-3 3-3.500 5-3.500s4.500 0.500 5 3.500z" fill="#2b344f"/></svg><svg style="left:181px;top:11px" width="17" height="16" viewBox="0 0 17 16"><path d="M5.500 3.500l10-3v10.500h-1.800v-7l-6.400 2v7.500h-1.800z" fill="#0aa8ff"/><ellipse cx="4.200" cy="13" rx="3.300" ry="2.600" fill="#0aa8ff"/><ellipse cx="12.500" cy="11" rx="3.300" ry="2.600" fill="#0aa8ff"/></svg><div style="left:221px;top:6px;width:459px;height:26px;border:1px solid #3a4568;background:#151a28"></div><svg style="left:228px;top:12px" width="18" height="14" viewBox="0 0 18 14"><circle cx="5.500" cy="5.500" r="4.300" fill="none" stroke="#c9ccd9" stroke-width="1.400"/><path d="M8.500 8.500l3.500 4" stroke="#c9ccd9" stroke-width="1.600"/><path d="M11 5h6l-3 3.500z" fill="#c9ccd9"/></svg><div class="t" style="left:254px;top:8.500px;font-size:15px;line-height:16px;font-style:italic;color:#c9ccd9">搜索当前视图</div><svg style="left:663px;top:15px" width="8" height="8" viewBox="0 0 8 8"><path d="M1 1l6 6M7 1l-6 6" stroke="#c9ccd9" stroke-width="1.300"/></svg><div style="left:692px;top:7px;width:29px;height:24px;border-radius:5px;background:#2b344f"></div><div style="left:724px;top:7px;width:59px;height:24px;border-radius:5px;background:#2b344f"></div><div style="left:753px;top:7px;width:1px;height:24px;background:#1c2132"></div><svg style="left:699px;top:13px" width="15" height="13" viewBox="0 0 15 13" fill="#0aa8ff"><rect x="0" y="0" width="15" height="8"/><rect x="0" y="9.800" width="15" height="3.200"/></svg><svg style="left:731px;top:13px" width="15" height="13" viewBox="0 0 15 13" fill="#c9ccd9"><rect x="0" y="0" width="3" height="3"/><rect x="4.300" y="0" width="10.700" height="3"/><rect x="0" y="5" width="3" height="3"/><rect x="4.300" y="5" width="10.700" height="3"/><rect x="0" y="10" width="3" height="3"/><rect x="4.300" y="10" width="10.700" height="3"/></svg><svg style="left:762px;top:13px" width="14" height="13" viewBox="0 0 14 13" fill="#0aa8ff"><rect x="0" y="0" width="6" height="5.200"/><rect x="8" y="0" width="6" height="5.200"/><rect x="0" y="7.800" width="6" height="5.200"/><rect x="8" y="7.800" width="6" height="5.200"/></svg><svg style="left:797px;top:11px" width="16" height="17" viewBox="0 0 16 17"><text x="0" y="7.500" font-family="Liberation Sans" font-size="9" fill="#c9ccd9">A</text><text x="0.300" y="16" font-family="Liberation Sans" font-size="9" fill="#c9ccd9">Z</text><path d="M11.500 0.500v12" stroke="#c9ccd9" stroke-width="1.700"/><path d="M8.300 11.500h6.400l-3.200 4.500z" fill="#c9ccd9"/></svg><div style="left:843px;top:14px;width:72px;height:4px;border-radius:2px;background:#000"></div><svg style="left:870px;top:12px" width="8" height="12" viewBox="0 0 8 12"><path d="M0.300 0h7.400v7.500l-3.700 4l-3.700-4z" fill="#c9ccd9"/></svg><div style="left:0px;top:41px;width:114px;height:96px;border:1px solid #262e49"></div><div class="th t1" style="left:10px;top:54px;width:93px;height:53px"></div><svg style="left:10px;top:54px" width="16" height="13" viewBox="0 0 16 13"><rect width="16" height="13" fill="#1c2132"/><rect x="1.700" y="1.700" width="12.600" height="8.600" fill="none" stroke="#e8e8ee" stroke-width="1.200"/><path d="M4.800 1.700v8.600M11.200 1.700v8.600M1.700 4.500h3M1.700 7.500h3M11.200 4.500h3M11.200 7.500h3" stroke="#e8e8ee" stroke-width="1"/></svg><div class="t" style="left:1px;top:118px;width:112px;overflow:hidden;font-size:14px;line-height:17px;color:#c9ccd9;letter-spacing:-0.220px">BG_Black and P...</div><div style="left:113px;top:41px;width:114px;height:96px;border:1px solid #262e49"></div><div class="th t2" style="left:123px;top:54px;width:93px;height:53px"></div><svg style="left:123px;top:54px" width="16" height="13" viewBox="0 0 16 13"><rect width="16" height="13" fill="#1c2132"/><rect x="1.700" y="1.700" width="12.600" height="8.600" fill="none" stroke="#e8e8ee" stroke-width="1.200"/><path d="M4.800 1.700v8.600M11.200 1.700v8.600M1.700 4.500h3M1.700 7.500h3M11.200 4.500h3M11.200 7.500h3" stroke="#e8e8ee" stroke-width="1"/></svg><div class="t" style="left:114px;top:118px;width:112px;overflow:hidden;font-size:14px;line-height:17px;color:#c9ccd9;letter-spacing:-0.220px">BG_Black Dots ...</div><div style="left:226px;top:41px;width:114px;height:96px;border:1px solid #262e49"></div><div class="th t3" style="left:236px;top:54px;width:93px;height:53px"></div><svg style="left:236px;top:54px" width="16" height="13" viewBox="0 0 16 13"><rect width="16" height="13" fill="#1c2132"/><rect x="1.700" y="1.700" width="12.600" height="8.600" fill="none" stroke="#e8e8ee" stroke-width="1.200"/><path d="M4.800 1.700v8.600M11.200 1.700v8.600M1.700 4.500h3M1.700 7.500h3M11.200 4.500h3M11.200 7.500h3" stroke="#e8e8ee" stroke-width="1"/></svg><div class="t" style="left:227px;top:118px;width:112px;overflow:hidden;font-size:14px;line-height:17px;color:#c9ccd9;letter-spacing:-0.220px">BG_White Cros...</div><div style="left:339px;top:41px;width:114px;height:96px;border:1px solid #262e49"></div><div class="th t4" style="left:349px;top:54px;width:93px;height:53px"></div><svg style="left:349px;top:54px" width="16" height="13" viewBox="0 0 16 13"><rect width="16" height="13" fill="#1c2132"/><rect x="1.700" y="1.700" width="12.600" height="8.600" fill="none" stroke="#e8e8ee" stroke-width="1.200"/><path d="M4.800 1.700v8.600M11.200 1.700v8.600M1.700 4.500h3M1.700 7.500h3M11.200 4.500h3M11.200 7.500h3" stroke="#e8e8ee" stroke-width="1"/></svg><div class="t" style="left:340px;top:118px;width:112px;overflow:hidden;font-size:14px;line-height:17px;color:#c9ccd9;letter-spacing:-0.220px">BG_Blue Hexag...</div><div style="left:452px;top:41px;width:114px;height:96px;border:1px solid #262e49"></div><div class="th t5" style="left:462px;top:54px;width:93px;height:53px"><svg style="left:0;top:0" width="91" height="51" viewBox="0 0 91 51"><defs><filter id="sb"><feGaussianBlur stdDeviation="2.200"/></filter></defs><rect width="91" height="51" fill="#070b26"/><g filter="url(#sb)" fill="none"><path d="M-2 30 C6 8 26 -2 48 2" stroke="#3d4fd0" stroke-width="9"/><path d="M93 14 C88 40 68 54 44 52" stroke="#3547c4" stroke-width="9"/><path d="M66 6 C56 14 40 16 36 30 C33 42 40 50 48 56" stroke="#5064e6" stroke-width="7"/><path d="M64 4 C76 14 72 30 58 32" stroke="#4a5ce0" stroke-width="5"/><ellipse cx="26" cy="30" rx="9" ry="14" fill="#02030c" stroke="none"/><ellipse cx="56" cy="42" rx="12" ry="7" fill="#02030c" stroke="none"/><ellipse cx="48" cy="10" rx="10" ry="5" fill="#02030c" stroke="none"/></g></svg></div><svg style="left:462px;top:54px" width="16" height="13" viewBox="0 0 16 13"><rect width="16" height="13" fill="#1c2132"/><rect x="1.700" y="1.700" width="12.600" height="8.600" fill="none" stroke="#e8e8ee" stroke-width="1.200"/><path d="M4.800 1.700v8.600M11.200 1.700v8.600M1.700 4.500h3M1.700 7.500h3M11.200 4.500h3M11.200 7.500h3" stroke="#e8e8ee" stroke-width="1"/></svg><div class="t" style="left:453px;top:118px;width:112px;overflow:hidden;font-size:14px;line-height:17px;color:#c9ccd9;letter-spacing:-0.220px">BG_Blue Swirl L...</div><div style="left:576px;top:47px;width:91px;height:68px;background:#000"></div><svg style="left:613px;top:73px" width="17" height="17" viewBox="0 0 17 17"><path d="M8.500 0v17M0 8.500h17" stroke="#e8e8ee" stroke-width="1"/></svg><div style="left:846px;top:456px;width:83px;height:19px;border-radius:4px 4px 0 0;background:#2b344f"></div><svg style="left:852px;top:460px" width="19" height="13" viewBox="0 0 19 13"><rect x="0" y="0" width="11" height="8" fill="#0aa8ff"/><rect x="5.500" y="3.500" width="13.500" height="9.500" rx="1" fill="#0aa8ff" stroke="#2b344f" stroke-width="0.800"/><g fill="#2b344f"><rect x="7.500" y="5.300" width="1.500" height="1.300"/><rect x="10" y="5.300" width="1.500" height="1.300"/><rect x="12.500" y="5.300" width="1.500" height="1.300"/><rect x="15" y="5.300" width="1.500" height="1.300"/><rect x="7.500" y="10" width="1.500" height="1.300"/><rect x="10" y="10" width="1.500" height="1.300"/><rect x="12.500" y="10" width="1.500" height="1.300"/><rect x="15" y="10" width="1.500" height="1.300"/></g></svg><svg style="left:879px;top:460px" width="18" height="13" viewBox="0 0 18 13"><rect x="0.600" y="0.600" width="16.800" height="11.800" fill="none" stroke="#c9ccd9" stroke-width="1.200"/><rect x="2.500" y="2.500" width="5.800" height="8" fill="#c9ccd9"/><rect x="9.700" y="2.500" width="5.800" height="8" fill="#c9ccd9"/></svg><svg style="left:908px;top:459px" width="14" height="14" viewBox="0 0 14 14"><path d="M7 1.500H0.700v11.800h11.800V7.500" fill="none" stroke="#c9ccd9" stroke-width="1.300"/><path d="M4.500 9.800l1-3.200l6.200-6.200l2.200 2.200l-6.200 6.200z" fill="#c9ccd9"/></svg>
</div>
</div>
<!--TIMELINE-->
<div id="tl"><div class="dots" style="left:4px;top:5px"></div><div style="left:0;top:12px;width:1920px;height:1px;background:#2c3756"></div><div style="left:0;top:46px;width:1920px;height:34.500px;background:#151a29"></div><div style="left:199px;top:70px;width:1697px;height:10.500px;background:#242b41"></div><div style="left:1896px;top:46px;width:24px;height:34.500px;background:#242b41"></div><svg style="left:22px;top:21px" width="25" height="17" viewBox="0 0 25 17" ><rect x="0.500" y="0.500" width="24" height="16" rx="2" fill="#c9ccd9"/><g fill="#242b41"><rect x="2.5" y="1.800" width="2" height="1.700"/><rect x="2.5" y="13.500" width="2" height="1.700"/><rect x="6.1" y="1.800" width="2" height="1.700"/><rect x="6.1" y="13.500" width="2" height="1.700"/><rect x="9.7" y="1.800" width="2" height="1.700"/><rect x="9.7" y="13.500" width="2" height="1.700"/><rect x="13.3" y="1.800" width="2" height="1.700"/><rect x="13.3" y="13.500" width="2" height="1.700"/><rect x="16.9" y="1.800" width="2" height="1.700"/><rect x="16.9" y="13.500" width="2" height="1.700"/><rect x="20.5" y="1.800" width="2" height="1.700"/><rect x="20.5" y="13.500" width="2" height="1.700"/><rect x="3" y="5" width="8.500" height="7"/><rect x="13.500" y="5" width="8.500" height="7"/></g></svg><div style="left:71px;top:14px;width:65px;height:30px;background:#151a28"></div><svg style="left:92px;top:21px" width="23" height="16" viewBox="0 0 23 16" ><rect x="0" y="0" width="23" height="16" rx="2" fill="#0aa8ff"/><g fill="#151a28"><rect x="2" y="6.500" width="19" height="1.800"/><rect x="2" y="10.500" width="19" height="1.800"/><path d="M11.500 2.500h6l-3 3.500z"/></g></svg><svg style="left:165px;top:19px" width="20" height="22" viewBox="0 0 20 22" ><rect x="0.800" y="0.800" width="11.500" height="14.500" rx="2" fill="none" stroke="#c9ccd9" stroke-width="1.600"/><path d="M6 5.500h7.500l5.500 5.500v9a1.500 1.500 0 0 1-1.500 1.500h-10a1.500 1.500 0 0 1-1.500-1.500z" fill="#c9ccd9" stroke="#242b41" stroke-width="1"/><path d="M8 15.500h6M11.500 12.500l3 3l-3 3" fill="none" stroke="#242b41" stroke-width="1.500"/></svg><svg style="left:211px;top:19px" width="20" height="20" viewBox="0 0 20 20" ><g stroke="#c9ccd9" fill="none"><path d="M3.500 3.500l13 13" stroke-width="3"/><path d="M16 3l-5 5M9 11l-6 6" stroke-width="2.600"/></g><circle cx="3.800" cy="3.800" r="3.200" fill="#c9ccd9"/><rect x="1" y="0" width="3" height="3.500" fill="#242b41" transform="rotate(-45 3.800 3.800)"/><circle cx="16.500" cy="16.500" r="3" fill="#c9ccd9"/><path d="M13.500 1.500l3-1.500l3.500 3.500l-1.500 3z" fill="#c9ccd9"/><path d="M1 19l1-3.500l2.500 2.500z" fill="#c9ccd9"/></svg><div style="left:235px;top:18px;width:1px;height:20px;background:#12151f"></div><svg style="left:254px;top:20px" width="18" height="18" viewBox="0 0 18 18" ><path d="M1 5.500l6.500-5v3.200c6 0 9.500 3 9.500 7.300c0 3-2 5.500-5 6.500c1.500-1.500 2-3 2-4.500c0-2.500-2.500-4-6.500-4v3.500z" fill="#4e5d80"/></svg><svg style="left:309px;top:20px" width="18" height="18" viewBox="0 0 18 18" ><path d="M17 5.500l-6.500-5v3.200c-6 0-9.500 3-9.500 7.300c0 3 2 5.500 5 6.500c-1.500-1.500-2-3-2-4.500c0-2.500 2.500-4 6.500-4v3.500z" fill="#4e5d80"/></svg><svg style="left:360px;top:21px" width="25" height="16" viewBox="0 0 25 16" ><g stroke="#c9ccd9" stroke-width="1.800" fill="none"><path d="M1.500 0v16M23.500 0v16M4.500 8h6M8 4.500L4.500 8l3.500 3.500M20.500 8h-6M17 4.500L20.500 8l-3.500 3.500"/></g></svg><svg style="left:416px;top:20px" width="24" height="18" viewBox="0 0 24 18" ><rect x="0.800" y="0.800" width="22.400" height="16.400" fill="none" stroke="#c9ccd9" stroke-width="1.600"/><g stroke="#c9ccd9" stroke-width="1.400" fill="none"><path d="M4 6.500h9M6.500 4L4 6.500L6.500 9M20 11.500h-9M17.500 9l2.500 2.500l-2.500 2.500"/></g></svg><svg style="left:470px;top:21px" width="26" height="16" viewBox="0 0 26 16" ><g stroke="#c9ccd9" stroke-width="1.800" fill="none"><path d="M13 0v16M1.500 8h8.500M5.500 4L1.500 8l4 4M24.500 8h-8.500M20.500 4l4 4l-4 4"/></g></svg><svg style="left:524px;top:20px" width="28" height="18" viewBox="0 0 28 18" ><g stroke="#c9ccd9" stroke-width="1.600" fill="none"><rect x="8.500" y="1" width="11" height="16" rx="1.500"/><path d="M1.500 9h7M4.500 6L1.500 9l3 3M26.500 9h-7M23.500 6l3 3l-3 3"/></g></svg><svg style="left:583px;top:20px" width="23" height="20" viewBox="0 0 23 20" ><circle cx="9.500" cy="9.500" r="9" fill="#c9ccd9"/><g fill="#242b41"><circle cx="9.500" cy="4.500" r="2.200"/><circle cx="4.700" cy="8" r="2.200"/><circle cx="14.300" cy="8" r="2.200"/><circle cx="6.500" cy="13.500" r="2.200"/><circle cx="12.500" cy="13.500" r="2.200"/></g><path d="M9.500 18.500h8" stroke="#c9ccd9" stroke-width="1.500"/><circle cx="16.500" cy="13" r="4.200" fill="#e00012"/></svg><svg style="left:636px;top:19px" width="23" height="21" viewBox="0 0 23 21" ><ellipse cx="3.500" cy="16" rx="3.200" ry="2.500" fill="#c9ccd9"/><path d="M5.300 16V2.500l5 2v3l-3.500-1.300v9.800z" fill="#c9ccd9"/><path d="M9.500 12l1.500-5l1.200 4l1.500-9l1.300 7l1.500-9l1.300 8l1.200-4l1.300 4l1.200 4l-1.200 3l-1.300 3l-1.200-4l-1.300 7l-1.500-8l-1.300 5l-1.500-6l-1.200 3z" fill="#c9ccd9"/></svg><svg style="left:690px;top:20px" width="24" height="20" viewBox="0 0 24 20" ><rect x="0.500" y="1.500" width="21" height="17" rx="1" fill="#c9ccd9"/><g fill="#242b41"><rect x="2" y="3" width="2.200" height="2"/><rect x="2" y="8.500" width="2.200" height="2"/><rect x="2" y="14" width="2.200" height="2"/><rect x="17.500" y="3" width="2.200" height="2"/><rect x="17.500" y="8.500" width="2.200" height="2"/><rect x="17.500" y="14" width="2.200" height="2"/><path d="M9 4.500l6-1.500v10.500a2.200 1.800 0 1 1-1.500-1.700v-6l-3 0.800v7.400a2.200 1.800 0 1 1-1.500-1.700z"/></g></svg><svg style="left:733px;top:21px" width="24" height="17" viewBox="0 0 24 17" ><circle cx="6" cy="11" r="5.800" fill="#c9ccd9"/><circle cx="12.500" cy="8" r="6" fill="#c9ccd9"/><circle cx="18" cy="5.800" r="5.500" fill="#c9ccd9"/></svg><svg style="left:787px;top:22px" width="23" height="16" viewBox="0 0 23 16" ><rect x="0.500" y="0.500" width="22" height="15" rx="1" fill="#c9ccd9"/><g fill="#242b41"><path d="M3 3.500h7.500v2.200h-2.600v6.800h-2.300v-6.800h-2.600z"/><rect x="12" y="4" width="8" height="1.500"/><rect x="12" y="7.300" width="8" height="1.500"/><rect x="12" y="10.600" width="8" height="1.500"/></g></svg><svg style="left:842px;top:22px" width="24" height="16" viewBox="0 0 24 16" ><g fill="none" stroke="#c9ccd9" stroke-width="1.700"><rect x="0.900" y="0.900" width="22.200" height="14.200" rx="1"/><path d="M1 8h22M12 1v14"/></g></svg><svg style="left:898px;top:19px" width="26" height="21" viewBox="0 0 26 21" ><g stroke="#c9ccd9" stroke-width="1.500"><path d="M0.500 5.500h9M0.500 9h7M0.500 12.500h6"/></g><circle cx="20.500" cy="3" r="2.300" fill="#c9ccd9"/><path d="M11.500 6.500l5-1.500l4 3l3.500 0.500M16.500 5.500l-2 6l4 3l-1 5.500M14.500 11.500l-2 4.500l-4 1" fill="none" stroke="#c9ccd9" stroke-width="2.200" stroke-linecap="round" stroke-linejoin="round"/></svg><svg style="left:952px;top:19px" width="25" height="21" viewBox="0 0 25 21" ><path d="M3 9L8 3l8-1l6 5l-1 7l-7 5l-8-3z" fill="none" stroke="#c9ccd9" stroke-width="1.400"/><circle cx="3" cy="9" r="1.500" fill="#c9ccd9"/><circle cx="8" cy="3" r="1.500" fill="#c9ccd9"/><circle cx="16" cy="2" r="1.500" fill="#c9ccd9"/><circle cx="22" cy="7" r="1.500" fill="#c9ccd9"/><circle cx="21" cy="14" r="1.500" fill="#c9ccd9"/><circle cx="14" cy="19" r="1.500" fill="#c9ccd9"/><circle cx="6" cy="16" r="1.500" fill="#c9ccd9"/></svg><svg style="left:1007px;top:20px" width="23" height="19" viewBox="0 0 23 19" ><g fill="none" stroke="#c9ccd9" stroke-width="1.800"><path d="M1 6V1h5M17 1h5v5M22 13v5h-5M6 18H1v-5"/></g><rect x="6.500" y="5.500" width="10" height="8" fill="none" stroke="#c9ccd9" stroke-width="1.200" stroke-dasharray="1.500 1"/><path d="M11.500 7v5M9 9.500h5" stroke="#c9ccd9" stroke-width="1.200"/></svg><div class="t" style="left:1062px;top:17px;font-size:24px;line-height:24px;color:#c9ccd9;font-weight:bold;transform-origin:0 0;transform:scaleX(.95)">T</div><div class="t" style="left:1075px;top:28px;font-size:11px;line-height:12px;color:#c9ccd9;letter-spacing:-0.800px">3D</div><svg style="left:1118px;top:21px" width="24" height="18" viewBox="0 0 24 18" ><rect x="0" y="0.500" width="19" height="15" fill="#c9ccd9"/><path d="M1 2l8.500 7l8.500-7" fill="none" stroke="#242b41" stroke-width="1.600"/><path d="M12 17l1-4l8-8l3 3l-8 8z" fill="#c9ccd9" stroke="#242b41" stroke-width="1"/></svg><svg style="left:1170px;top:20px" width="25" height="19" viewBox="0 0 25 19" ><rect x="0.500" y="1.500" width="21" height="16" fill="#c9ccd9"/><g fill="#242b41"><rect x="2" y="3" width="2" height="1.800"/><rect x="5.500" y="3" width="2" height="1.800"/><rect x="9" y="3" width="2" height="1.800"/><rect x="12.500" y="3" width="2" height="1.800"/><rect x="2" y="14.200" width="2" height="1.800"/><rect x="5.500" y="14.200" width="2" height="1.800"/><rect x="9" y="14.200" width="2" height="1.800"/><rect x="12.500" y="14.200" width="2" height="1.800"/><rect x="16" y="14.200" width="2" height="1.800"/><rect x="3" y="6" width="15" height="7"/></g><path d="M8 13l1.500-4.500L20 1l3 3l-10.500 7.500z" fill="#c9ccd9" stroke="#242b41" stroke-width="0.800"/></svg><svg style="left:1229px;top:22px" width="22" height="18" viewBox="0 0 22 18" ><rect x="0.600" y="0.600" width="19.800" height="15.800" fill="none" stroke="#c9ccd9" stroke-width="1.200"/><path d="M20.400 0.600V16.400H0.600z" fill="#c9ccd9"/><rect x="4" y="2.500" width="3.600" height="6" rx="1.800" fill="#c9ccd9"/><path d="M2.800 6.500a3 3 0 0 0 6 0M5.800 9.500v2" stroke="#c9ccd9" stroke-width="1" fill="none"/><path d="M12.500 9.500h6v1.600h-2.200v4.400h-1.600v-4.400h-2.200z" fill="#242b41"/></svg><div style="left:1283px;top:22px;width:20px;height:16px;border-radius:2px;background:#c9ccd9"></div><div style="left:1303px;top:25px;width:3px;height:10px;border-radius:0 2px 2px 0;background:#c9ccd9"></div><div class="t" style="left:1284px;top:24px;font-size:11.500px;line-height:12px;color:#242b41;font-weight:bold;letter-spacing:-0.300px">GIF</div><svg style="left:1597px;top:20px" width="20" height="19" viewBox="0 0 20 19" ><circle cx="7.500" cy="7.500" r="6.300" fill="none" stroke="#c9ccd9" stroke-width="1.500"/><path d="M12 12l6.500 6.500" stroke="#c9ccd9" stroke-width="2"/><path d="M4.500 7.500h6" stroke="#c9ccd9" stroke-width="1.700"/></svg><div style="left:1627px;top:26px;width:72px;height:4px;border-radius:2px;background:#000"></div><svg style="left:1674px;top:24px" width="8" height="12" viewBox="0 0 8 12" ><path d="M0.300 0h7.400v7.500l-3.700 4l-3.700-4z" fill="#c9ccd9"/></svg><svg style="left:1711px;top:20px" width="20" height="19" viewBox="0 0 20 19" ><circle cx="7.500" cy="7.500" r="6.300" fill="none" stroke="#c9ccd9" stroke-width="1.500"/><path d="M12 12l6.500 6.500" stroke="#c9ccd9" stroke-width="2"/><path d="M4.500 7.500h6M7.500 4.500v6" stroke="#c9ccd9" stroke-width="1.700"/></svg><svg style="left:1747px;top:22px" width="16" height="13" viewBox="0 0 16 13" ><rect x="0.600" y="0.600" width="14.800" height="11.800" fill="none" stroke="#c9ccd9" stroke-width="1.200"/><path d="M3 6.500h10M5.500 4L3 6.500L5.500 9M10.500 4L13 6.500L10.500 9" fill="none" stroke="#c9ccd9" stroke-width="1.200"/></svg><svg style="left:1781px;top:21px" width="16" height="16" viewBox="0 0 16 16" ><circle cx="8" cy="8" r="7.700" fill="#c9ccd9"/><path d="M8 1.500v6.500l4 4.500" fill="none" stroke="#242b41" stroke-width="1.600"/></svg><div style="left:1806px;top:20px;width:102px;height:18px;background:#151a28"></div><div class="t" style="left:1815.500px;top:20.5px;font-size:15.500px;line-height:16px;color:#d6d9e4;letter-spacing:0.250px">0:02:43:<span style="font-size:11.500px;margin-left:2px;letter-spacing:0">006</span></div><svg style="left:23px;top:56px" width="22" height="16" viewBox="0 0 22 16" ><path d="M2.500 1.500H0.700v13h1.800" fill="none" stroke="#c9ccd9" stroke-width="1.200"/><g fill="#c9ccd9"><rect x="4" y="1" width="11" height="3"/><rect x="4" y="6.500" width="11" height="3"/><rect x="4" y="12" width="11" height="3"/></g><path d="M18.500 0v5M16.500 3l2 2.200l2-2.200M18.500 16v-5M16.500 13l2-2.200l2 2.200" fill="none" stroke="#c9ccd9" stroke-width="1.200"/></svg><svg style="left:76px;top:56px" width="19" height="16" viewBox="0 0 19 16" ><g fill="#c9ccd9"><rect x="0" y="1" width="11" height="3.200"/><rect x="0" y="6.500" width="11" height="3.200"/><rect x="0" y="12" width="11" height="3.200"/></g><path d="M13 4h5M15.500 1.500v5M13 12.500h5" stroke="#c9ccd9" stroke-width="1.300"/></svg><svg style="left:118px;top:57px" width="22" height="12" viewBox="0 0 22 12" ><path d="M0.500 11.500h12l-6-10.500z" fill="#1ee88c"/><path d="M15 4h5.500l-2.750 3z" fill="#c9ccd9"/></svg><div style="left:197px;top:46px;width:2px;height:418px;background:#12151f"></div><div style="left:274px;top:56px;width:1px;height:13px;background:#6a7186"></div><div class="t" style="left:200px;top:50px;font-size:13.800px;line-height:14px;color:#c9ccd9">00:00:00:00</div><div style="left:349px;top:52px;width:1px;height:17px;background:#6a7186"></div><div style="left:424px;top:56px;width:1px;height:13px;background:#6a7186"></div><div class="t" style="left:350px;top:50px;font-size:13.800px;line-height:14px;color:#c9ccd9">00:00:02:00</div><div style="left:499px;top:52px;width:1px;height:17px;background:#6a7186"></div><div style="left:574px;top:56px;width:1px;height:13px;background:#6a7186"></div><div class="t" style="left:500px;top:50px;font-size:13.800px;line-height:14px;color:#c9ccd9">00:00:04:00</div><div style="left:649px;top:52px;width:1px;height:17px;background:#6a7186"></div><div style="left:724px;top:56px;width:1px;height:13px;background:#6a7186"></div><div class="t" style="left:650px;top:50px;font-size:13.800px;line-height:14px;color:#c9ccd9">00:00:06:00</div><div style="left:799px;top:52px;width:1px;height:17px;background:#6a7186"></div><div style="left:874px;top:56px;width:1px;height:13px;background:#6a7186"></div><div class="t" style="left:800px;top:50px;font-size:13.800px;line-height:14px;color:#c9ccd9">00:00:08:00</div><div style="left:949px;top:52px;width:1px;height:17px;background:#6a7186"></div><div style="left:1024px;top:56px;width:1px;height:13px;background:#6a7186"></div><div class="t" style="left:950px;top:50px;font-size:13.800px;line-height:14px;color:#c9ccd9">00:00:10:00</div><div style="left:1099px;top:52px;width:1px;height:17px;background:#6a7186"></div><div style="left:1174px;top:56px;width:1px;height:13px;background:#6a7186"></div><div class="t" style="left:1100px;top:50px;font-size:13.800px;line-height:14px;color:#c9ccd9">00:00:12:00</div><div style="left:1249px;top:52px;width:1px;height:17px;background:#6a7186"></div><div style="left:1324px;top:56px;width:1px;height:13px;background:#6a7186"></div><div class="t" style="left:1250px;top:50px;font-size:13.800px;line-height:14px;color:#c9ccd9">00:00:14:00</div><div style="left:1399px;top:52px;width:1px;height:17px;background:#6a7186"></div><div style="left:1474px;top:56px;width:1px;height:13px;background:#6a7186"></div><div class="t" style="left:1400px;top:50px;font-size:13.800px;line-height:14px;color:#c9ccd9">00:00:16:00</div><div style="left:1549px;top:52px;width:1px;height:17px;background:#6a7186"></div><div style="left:1624px;top:56px;width:1px;height:13px;background:#6a7186"></div><div class="t" style="left:1550px;top:50px;font-size:13.800px;line-height:14px;color:#c9ccd9">00:00:18:00</div><div style="left:1699px;top:52px;width:1px;height:17px;background:#6a7186"></div><div style="left:1774px;top:56px;width:1px;height:13px;background:#6a7186"></div><div class="t" style="left:1700px;top:50px;font-size:13.800px;line-height:14px;color:#c9ccd9">00:00:20:00</div><div style="left:1849px;top:52px;width:1px;height:17px;background:#6a7186"></div><div class="t" style="left:1850px;top:50px;width:46px;overflow:hidden;font-size:13.800px;line-height:14px;color:#c9ccd9">00:00:22:00</div><div style="left:199px;top:69px;width:1698px;height:1px;background:#6a7186"></div><div style="left:199px;top:46px;width:1px;height:23px;background:#6a7186"></div><div style="left:1896px;top:46px;width:1px;height:24px;background:#6a7186"></div><div style="left:202px;top:45px;width:1.200px;height:24px;background:#f0e4cc"></div><svg style="left:1207px;top:50px" width="13" height="14" viewBox="0 0 13 14" ><path d="M0.200 0.300h12.600v7.800l-6.300 5.700l-6.300-5.700z" fill="#ede6d6"/></svg><div style="left:199px;top:80.5px;width:1697px;height:383px;background:#151a29;overflow:hidden"><!--CLIPS--><div style="left:0;top:-1.5px;width:1698px;height:1px;background:#232c47"></div><div style="left:0;top:59.5px;width:1698px;height:1px;background:#232c47"></div><div style="left:0;top:120.5px;width:1698px;height:1px;background:#232c47"></div><div style="left:0;top:181.5px;width:1698px;height:1px;background:#232c47"></div><div style="left:0;top:242.5px;width:1698px;height:1px;background:#232c47"></div><div style="left:0;top:303.5px;width:1698px;height:1px;background:#232c47"></div><div style="left:0;top:364.5px;width:1698px;height:1px;background:#232c47"></div><div class="clip blk" style="left:0.5px;top:1.5px;width:75.5px;height:58px"></div><div style="left:78px;top:10.5px;width:73px;height:39px;border-radius:2px;background:#6b5a3c;overflow:hidden"><div style="left:12px;top:0;width:50px;height:39px;background:linear-gradient(180deg,#a87c60 0%,#b48a6c 25%,#a4664f 55%,#7e3a30 80%,#6a2a25 100%)"></div><div class="t" style="left:26px;top:3px;font-size:29px;line-height:29px;font-weight:bold;color:#d4c296;opacity:.85;-webkit-text-stroke:1.200px #d4c296;transform-origin:50% 100%;transform:perspective(40px) rotateX(12deg) scaleX(.95);text-shadow:0 1px 0 #b08a6a">B</div><div style="left:26px;top:28px;width:22px;height:2px;background:#c9a98a;opacity:.55"></div></div><div class="clip teal" style="left:153px;top:1.5px;width:524px;height:58px"><div style="left:0;top:0;width:20px;height:35px;background:linear-gradient(180deg,#7fb5a6 0%,#4e9a8a 35%,#a7c9bd 60%,#7aa897 100%)"></div><div class="lb" style="left:25px"><span class="c">背景</span> 01.jpg</div></div><div style="left:678px;top:10.5px;width:73px;height:39px;border-radius:2px;background:#6b5a3c;overflow:hidden"><div style="left:12px;top:0;width:50px;height:39px;background:linear-gradient(180deg,#a87c60 0%,#b48a6c 25%,#a4664f 55%,#7e3a30 80%,#6a2a25 100%)"></div><div class="t" style="left:26px;top:3px;font-size:29px;line-height:29px;font-weight:bold;color:#d4c296;opacity:.85;-webkit-text-stroke:1.200px #d4c296;transform-origin:50% 100%;transform:perspective(40px) rotateX(12deg) scaleX(.95);text-shadow:0 1px 0 #b08a6a">B</div><div style="left:26px;top:28px;width:22px;height:2px;background:#c9a98a;opacity:.55"></div></div><div class="clip teal" style="left:753px;top:1.5px;width:943px;height:58px"><div style="left:0;top:0;width:20px;height:35px;background:radial-gradient(ellipse 80% 60% at 35% 55%,#dcf2b4 0,#a8d86c 55%,#62b01e 100%)"></div><div class="lb" style="left:25px"><span class="c">背景</span> 02.JPG</div></div><svg style="left:760px;top:3.5px" width="21" height="21" viewBox="0 0 21 21"><rect width="21" height="21" fill="#000"/><path d="M10.400 0.700L13 5.700L19.200 7.100L15.300 12L15.900 18.200L9.800 15.400L9.400 15.600L9.400 10.400L4.800 12.600L5.500 12L1.800 7.400L7.800 5.700Z" fill="#ffb000"/><path d="M2.200 14.900L8.400 11.600L7.900 18.900L5.900 17.200L3.600 20L2.400 18.800L4.600 16.200Z" fill="#ffb000"/></svg><div style="left:153px;top:71.5px;width:73px;height:39px;border-radius:2px;background:#6b5a3c;overflow:hidden"><div style="left:12px;top:0;width:50px;height:39px;background:linear-gradient(180deg,#a87c60 0%,#b48a6c 25%,#a4664f 55%,#7e3a30 80%,#6a2a25 100%)"></div><div class="t" style="left:26px;top:3px;font-size:29px;line-height:29px;font-weight:bold;color:#d4c296;opacity:.85;-webkit-text-stroke:1.200px #d4c296;transform-origin:50% 100%;transform:perspective(40px) rotateX(12deg) scaleX(.95);text-shadow:0 1px 0 #b08a6a">B</div><div style="left:26px;top:28px;width:22px;height:2px;background:#c9a98a;opacity:.55"></div></div><div class="clip grn" style="left:228px;top:62.5px;width:448px;height:58px"><div class="lb" style="left:11px"><span class="c">竖屏波光水影飘落照片遮罩版</span></div></div><div style="left:678px;top:71.5px;width:73px;height:39px;border-radius:2px;background:#6b5a3c;overflow:hidden"><div style="left:12px;top:0;width:50px;height:39px;background:linear-gradient(180deg,#a87c60 0%,#b48a6c 25%,#a4664f 55%,#7e3a30 80%,#6a2a25 100%)"></div><div class="t" style="left:26px;top:3px;font-size:29px;line-height:29px;font-weight:bold;color:#d4c296;opacity:.85;-webkit-text-stroke:1.200px #d4c296;transform-origin:50% 100%;transform:perspective(40px) rotateX(12deg) scaleX(.95);text-shadow:0 1px 0 #b08a6a">B</div><div style="left:26px;top:28px;width:22px;height:2px;background:#c9a98a;opacity:.55"></div></div><div class="clip teal" style="left:753px;top:62.5px;width:673px;height:58px"><div style="left:0;top:0;width:20px;height:35px;background:linear-gradient(180deg,#6f6a45 0%,#cdbb8c 28%,#eadcae 65%,#d8be88 100%)"></div><div class="lb" style="left:25px">Z_01.JPG</div></div><svg style="left:760px;top:64.5px" width="21" height="21" viewBox="0 0 21 21"><rect width="21" height="21" fill="#000"/><path d="M10.400 0.700L13 5.700L19.200 7.100L15.300 12L15.900 18.200L9.800 15.400L9.400 15.600L9.400 10.400L4.800 12.600L5.500 12L1.800 7.400L7.800 5.700Z" fill="#ffb000"/><path d="M2.200 14.900L8.400 11.600L7.900 18.900L5.900 17.200L3.600 20L2.400 18.800L4.600 16.200Z" fill="#ffb000"/></svg><div class="clip teal" style="left:1428px;top:62.5px;width:268px;height:58px"><div style="left:0;top:0;width:20px;height:35px;background:linear-gradient(180deg,#8a5a50 0%,#b06a70 50%,#90545a 100%)"></div><div class="lb" style="left:25px">Z_02.JPG</div></div><svg style="left:1435px;top:64.5px" width="21" height="21" viewBox="0 0 21 21"><rect width="21" height="21" fill="#000"/><path d="M10.400 0.700L13 5.700L19.200 7.100L15.300 12L15.900 18.200L9.800 15.400L9.400 15.600L9.400 10.400L4.800 12.600L5.500 12L1.800 7.400L7.800 5.700Z" fill="#ffb000"/><path d="M2.200 14.900L8.400 11.600L7.900 18.900L5.900 17.200L3.600 20L2.400 18.800L4.600 16.200Z" fill="#ffb000"/></svg><div class="clip wht" style="left:753px;top:123.5px;width:673px;height:58px"></div><svg style="left:760px;top:125.5px" width="21" height="21" viewBox="0 0 21 21"><rect width="21" height="21" fill="#000"/><path d="M10.400 0.700L13 5.700L19.200 7.100L15.300 12L15.900 18.200L9.800 15.400L9.400 15.600L9.400 10.400L4.800 12.600L5.500 12L1.800 7.400L7.800 5.700Z" fill="#ffb000"/><path d="M2.200 14.900L8.400 11.600L7.900 18.900L5.900 17.200L3.600 20L2.400 18.800L4.600 16.200Z" fill="#ffb000"/></svg><div class="clip wht" style="left:1428px;top:123.5px;width:267px;height:58px"></div><svg style="left:1435px;top:125.5px" width="21" height="21" viewBox="0 0 21 21"><rect width="21" height="21" fill="#000"/><path d="M10.400 0.700L13 5.700L19.200 7.100L15.300 12L15.900 18.200L9.800 15.400L9.400 15.600L9.400 10.400L4.800 12.600L5.500 12L1.800 7.400L7.800 5.700Z" fill="#ffb000"/><path d="M2.200 14.900L8.400 11.600L7.900 18.900L5.900 17.200L3.600 20L2.400 18.800L4.600 16.200Z" fill="#ffb000"/></svg><div style="left:828px;top:193.5px;width:373px;height:39px;border-radius:2px;background:#6b5a3c;overflow:hidden"><svg style="left:162px;top:0" width="50" height="39" viewBox="0 0 50 39"><defs><linearGradient id="cg1a" x1="0" y1="0" x2="0" y2="1"><stop offset="0" stop-color="#e7621b"/><stop offset=".4" stop-color="#e87a32"/><stop offset="1" stop-color="#a2380b"/></linearGradient><linearGradient id="cg1b" x1="0" y1="0" x2="0" y2="1"><stop offset="0" stop-color="#6fb6e0"/><stop offset=".5" stop-color="#8ec8e6"/><stop offset=".68" stop-color="#2f6fb4"/><stop offset="1" stop-color="#182c78"/></linearGradient><linearGradient id="cg1c" x1="0" y1="0" x2="1" y2="0.400"><stop offset="0" stop-color="#fff"/><stop offset=".45" stop-color="#e8e8e8"/><stop offset="1" stop-color="#222"/></linearGradient><linearGradient id="cg1d" x1="1" y1="0.600" x2="0" y2="0"><stop offset="0" stop-color="#fff"/><stop offset=".45" stop-color="#e8e8e8"/><stop offset="1" stop-color="#222"/></linearGradient></defs><rect width="50" height="39" fill="url(#cg1a)"/><polygon points="22.400,0 43.200,0 28.600,39 8.500,39" fill="url(#cg1b)"/><polygon points="18.700,7.400 6,22 9.300,29.300" fill="url(#cg1c)"/><polygon points="41,8.200 44.300,16.200 32.200,28.600" fill="url(#cg1d)"/><path d="M18.700 7.400L9.300 29.300M41 8.200L32.200 28.600" stroke="#111" stroke-width="0.800"/></svg></div><div class="clip grn2" style="left:1203px;top:184.5px;width:298px;height:58px"></div><svg style="left:1210px;top:186.5px" width="21" height="21" viewBox="0 0 21 21"><rect width="21" height="21" fill="#000"/><path d="M10.400 0.700L13 5.700L19.200 7.100L15.300 12L15.900 18.200L9.800 15.400L9.400 15.600L9.400 10.400L4.800 12.600L5.500 12L1.800 7.400L7.800 5.700Z" fill="#ffb000"/><path d="M2.200 14.900L8.400 11.600L7.900 18.900L5.900 17.200L3.600 20L2.400 18.800L4.600 16.200Z" fill="#ffb000"/></svg><div style="left:1503px;top:193.5px;width:193px;height:39px;border-radius:2px;background:#6b5a3c;overflow:hidden"><svg style="left:162px;top:0" width="50" height="39" viewBox="0 0 50 39"><defs><linearGradient id="cg2a" x1="0" y1="0" x2="0" y2="1"><stop offset="0" stop-color="#e7621b"/><stop offset=".4" stop-color="#e87a32"/><stop offset="1" stop-color="#a2380b"/></linearGradient><linearGradient id="cg2b" x1="0" y1="0" x2="0" y2="1"><stop offset="0" stop-color="#6fb6e0"/><stop offset=".5" stop-color="#8ec8e6"/><stop offset=".68" stop-color="#2f6fb4"/><stop offset="1" stop-color="#182c78"/></linearGradient><linearGradient id="cg2c" x1="0" y1="0" x2="1" y2="0.400"><stop offset="0" stop-color="#fff"/><stop offset=".45" stop-color="#e8e8e8"/><stop offset="1" stop-color="#222"/></linearGradient><linearGradient id="cg2d" x1="1" y1="0.600" x2="0" y2="0"><stop offset="0" stop-color="#fff"/><stop offset=".45" stop-color="#e8e8e8"/><stop offset="1" stop-color="#222"/></linearGradient></defs><rect width="50" height="39" fill="url(#cg2a)"/><polygon points="22.400,0 43.200,0 28.600,39 8.500,39" fill="url(#cg2b)"/><polygon points="18.700,7.400 6,22 9.300,29.300" fill="url(#cg2c)"/><polygon points="41,8.200 44.300,16.200 32.200,28.600" fill="url(#cg2d)"/><path d="M18.700 7.400L9.300 29.300M41 8.200L32.200 28.600" stroke="#111" stroke-width="0.800"/></svg></div><div style="left:678px;top:254.5px;width:73px;height:39px;border-radius:2px;background:#6b5a3c;overflow:hidden"><div style="left:12px;top:0;width:50px;height:39px;background:linear-gradient(180deg,#a87c60 0%,#b48a6c 25%,#a4664f 55%,#7e3a30 80%,#6a2a25 100%)"></div><div class="t" style="left:26px;top:3px;font-size:29px;line-height:29px;font-weight:bold;color:#d4c296;opacity:.85;-webkit-text-stroke:1.200px #d4c296;transform-origin:50% 100%;transform:perspective(40px) rotateX(12deg) scaleX(.95);text-shadow:0 1px 0 #b08a6a">B</div><div style="left:26px;top:28px;width:22px;height:2px;background:#c9a98a;opacity:.55"></div></div><div class="clip teal" style="left:753px;top:245.5px;width:943px;height:58px"><div style="left:0;top:0;width:20px;height:35px;background:linear-gradient(180deg,#4a8a1c 0,#2a5a10 8%,#000 12%)"></div><div class="lb" style="left:25px"><span class="c">背景</span> 02<span class="c">绿叶</span>.PNG</div></div><svg style="left:760px;top:247.5px" width="21" height="21" viewBox="0 0 21 21"><rect width="21" height="21" fill="#000"/><path d="M10.400 0.700L13 5.700L19.200 7.100L15.300 12L15.900 18.200L9.800 15.400L9.400 15.600L9.400 10.400L4.800 12.600L5.500 12L1.800 7.400L7.800 5.700Z" fill="#ffb000"/><path d="M2.200 14.900L8.400 11.600L7.900 18.900L5.900 17.200L3.600 20L2.400 18.800L4.600 16.200Z" fill="#ffb000"/></svg><div style="left:78px;top:315.5px;width:73px;height:39px;border-radius:2px;background:#6b5a3c;overflow:hidden"><div style="left:12px;top:0;width:50px;height:39px;background:linear-gradient(180deg,#a87c60 0%,#b48a6c 25%,#a4664f 55%,#7e3a30 80%,#6a2a25 100%)"></div><div class="t" style="left:26px;top:3px;font-size:29px;line-height:29px;font-weight:bold;color:#d4c296;opacity:.85;-webkit-text-stroke:1.200px #d4c296;transform-origin:50% 100%;transform:perspective(40px) rotateX(12deg) scaleX(.95);text-shadow:0 1px 0 #b08a6a">B</div><div style="left:26px;top:28px;width:22px;height:2px;background:#c9a98a;opacity:.55"></div></div><div class="clip gry" style="left:153px;top:308.5px;width:526px;height:56px;overflow:visible"><div style="left:0;top:-2px;width:20px;height:35px;background:#000"></div><div class="lb" style="left:25px;top:-2.500px"><span class="c">循环粒子</span>.MP4</div></div><div class="clip gry" style="left:682px;top:308.5px;width:600px;height:56px;overflow:visible"><div style="left:0;top:-2px;width:20px;height:35px;background:#000"></div><div class="lb" style="left:25px;top:-2.500px"><span class="c">循环粒子</span>.MP4</div></div><div class="clip gry" style="left:1285px;top:308.5px;width:411px;height:56px;overflow:visible"><div style="left:0;top:-2px;width:20px;height:35px;background:#000"></div><div class="lb" style="left:25px;top:-2.500px"><span class="c">循环粒子</span>.MP4</div></div><div style="left:681px;top:306.5px;width:1px;height:57px;background:#d0d0d0"></div><div style="left:1284px;top:306.5px;width:1px;height:57px;background:#d0d0d0"></div><div style="left:1014px;top:0.5px;width:2px;height:382px;background:linear-gradient(90deg,#f4f0ff 0 55%,#6a6cf0 55%)"></div><div style="left:1014px;top:123.5px;width:2px;height:58px;background:linear-gradient(90deg,#2a1608 0 50%,#e8902a 50%)"></div><!--CLIPSEND--></div><div style="left:0;top:80px;width:199px;height:61px;background:#12151f;overflow:hidden"><div style="left:1px;top:1px;width:197px;height:59.6px;background:#242b41"></div><div style="left:50px;top:3px;width:1px;height:55px;background:#1a2032"></div><svg style="left:7px;top:25px" width="21" height="13" viewBox="0 0 21 13"><rect x="0" y="0.300" width="14.500" height="12.200" rx="2" fill="#c9ccd9"/><path d="M15.500 4.500l4.800-3.200v10.400l-4.800-3.200z" fill="#c9ccd9"/><path d="M5.500 3.500v6l4.500-3z" fill="#242b41"/></svg><svg style="left:64px;top:35px" width="13" height="13" viewBox="0 0 13 13"><g fill="none" stroke="#c9ccd9" stroke-width="1.500" stroke-linecap="round"><path d="M5.500 7.500a2.600 2.600 0 0 0 3.700 0l2-2a2.600 2.600 0 0 0-3.700-3.700l-0.800 0.800"/><path d="M7.500 5.500a2.600 2.600 0 0 0-3.700 0l-2 2a2.600 2.600 0 0 0 3.700 3.700l0.800-0.800"/></g></svg><svg style="left:80px;top:44px" width="6" height="4" viewBox="0 0 6 4"><path d="M0 0h6l-3 4z" fill="#c9ccd9"/></svg><svg style="left:110px;top:35px" width="18" height="13" viewBox="0 0 16.500 13" preserveAspectRatio="none"><path d="M0.500 4h3l4-3.500v12l-4-3.500h-3z" fill="#c9ccd9"/><g fill="none" stroke="#c9ccd9" stroke-width="1.300"><path d="M9.500 4a3.500 3.500 0 0 1 0 5M12 1.500a7 7 0 0 1 0 10"/></g></svg><svg style="left:161px;top:35px" width="12" height="12" viewBox="0 0 12 12" fill="#c9ccd9"><rect x="0.0" y="0.0" width="2.400" height="2.400"/><rect x="4.8" y="0.0" width="2.400" height="2.400"/><rect x="9.6" y="0.0" width="2.400" height="2.400"/><rect x="2.4" y="2.4" width="2.400" height="2.400"/><rect x="7.199999999999999" y="2.4" width="2.400" height="2.400"/><rect x="0.0" y="4.8" width="2.400" height="2.400"/><rect x="4.8" y="4.8" width="2.400" height="2.400"/><rect x="9.6" y="4.8" width="2.400" height="2.400"/><rect x="2.4" y="7.199999999999999" width="2.400" height="2.400"/><rect x="7.199999999999999" y="7.199999999999999" width="2.400" height="2.400"/><rect x="0.0" y="9.6" width="2.400" height="2.400"/><rect x="4.8" y="9.6" width="2.400" height="2.400"/><rect x="9.6" y="9.6" width="2.400" height="2.400"/></svg><div class="t" style="left:58px;top:11px;font-size:16px;line-height:17px;color:#c9ccd9">视频</div></div><div style="left:0;top:141px;width:199px;height:61px;background:#12151f;overflow:hidden"><div style="left:1px;top:1px;width:197px;height:59.6px;background:#242b41"></div><div style="left:50px;top:3px;width:1px;height:55px;background:#1a2032"></div><svg style="left:7px;top:25px" width="21" height="13" viewBox="0 0 21 13"><rect x="0" y="0.300" width="14.500" height="12.200" rx="2" fill="#c9ccd9"/><path d="M15.500 4.500l4.800-3.200v10.400l-4.800-3.200z" fill="#c9ccd9"/><text x="7.200" y="10.200" text-anchor="middle" font-family="Liberation Sans" font-weight="bold" font-size="10" fill="#242b41">1</text></svg><svg style="left:64px;top:35px" width="13" height="13" viewBox="0 0 13 13"><g fill="none" stroke="#4e5d80" stroke-width="1.500" stroke-linecap="round"><path d="M5.500 7.500a2.600 2.600 0 0 0 3.700 0l2-2a2.600 2.600 0 0 0-3.700-3.700l-0.800 0.800"/><path d="M7.500 5.500a2.600 2.600 0 0 0-3.700 0l-2 2a2.600 2.600 0 0 0 3.700 3.700l0.800-0.800"/></g></svg><svg style="left:110px;top:35px" width="18" height="13" viewBox="0 0 16.500 13" preserveAspectRatio="none"><path d="M0.500 4h3l4-3.500v12l-4-3.500h-3z" fill="#c9ccd9"/><g fill="none" stroke="#c9ccd9" stroke-width="1.300"><path d="M9.500 4a3.500 3.500 0 0 1 0 5M12 1.500a7 7 0 0 1 0 10"/></g></svg><svg style="left:161px;top:33px" width="12" height="12" viewBox="0 0 12 12" fill="#c9ccd9"><rect x="0.0" y="0.0" width="2.400" height="2.400"/><rect x="4.8" y="0.0" width="2.400" height="2.400"/><rect x="9.6" y="0.0" width="2.400" height="2.400"/><rect x="2.4" y="2.4" width="2.400" height="2.400"/><rect x="7.199999999999999" y="2.4" width="2.400" height="2.400"/><rect x="0.0" y="4.8" width="2.400" height="2.400"/><rect x="4.8" y="4.8" width="2.400" height="2.400"/><rect x="9.6" y="4.8" width="2.400" height="2.400"/><rect x="2.4" y="7.199999999999999" width="2.400" height="2.400"/><rect x="7.199999999999999" y="7.199999999999999" width="2.400" height="2.400"/><rect x="0.0" y="9.6" width="2.400" height="2.400"/><rect x="4.8" y="9.6" width="2.400" height="2.400"/><rect x="9.6" y="9.6" width="2.400" height="2.400"/></svg><div class="t" style="left:58px;top:11px;font-size:16px;line-height:17px;color:#c9ccd9">叠加1</div></div><div style="left:0;top:202px;width:199px;height:61px;background:#12151f;overflow:hidden"><div style="left:1px;top:1px;width:197px;height:59.6px;background:#242b41"></div><div style="left:50px;top:3px;width:1px;height:55px;background:#1a2032"></div><svg style="left:7px;top:25px" width="21" height="13" viewBox="0 0 21 13"><rect x="0" y="0.300" width="14.500" height="12.200" rx="2" fill="#c9ccd9"/><path d="M15.500 4.500l4.800-3.200v10.400l-4.800-3.200z" fill="#c9ccd9"/><text x="7.200" y="10.200" text-anchor="middle" font-family="Liberation Sans" font-weight="bold" font-size="10" fill="#242b41">2</text></svg><svg style="left:64px;top:35px" width="13" height="13" viewBox="0 0 13 13"><g fill="none" stroke="#4e5d80" stroke-width="1.500" stroke-linecap="round"><path d="M5.500 7.500a2.600 2.600 0 0 0 3.700 0l2-2a2.600 2.600 0 0 0-3.700-3.700l-0.800 0.800"/><path d="M7.500 5.500a2.600 2.600 0 0 0-3.700 0l-2 2a2.600 2.600 0 0 0 3.700 3.700l0.800-0.800"/></g></svg><svg style="left:110px;top:35px" width="18" height="13" viewBox="0 0 16.500 13" preserveAspectRatio="none"><path d="M0.500 4h3l4-3.500v12l-4-3.500h-3z" fill="#c9ccd9"/><g fill="none" stroke="#c9ccd9" stroke-width="1.300"><path d="M9.500 4a3.500 3.500 0 0 1 0 5M12 1.500a7 7 0 0 1 0 10"/></g></svg><svg style="left:161px;top:33px" width="12" height="12" viewBox="0 0 12 12" fill="#c9ccd9"><rect x="0.0" y="0.0" width="2.400" height="2.400"/><rect x="4.8" y="0.0" width="2.400" height="2.400"/><rect x="9.6" y="0.0" width="2.400" height="2.400"/><rect x="2.4" y="2.4" width="2.400" height="2.400"/><rect x="7.199999999999999" y="2.4" width="2.400" height="2.400"/><rect x="0.0" y="4.8" width="2.400" height="2.400"/><rect x="4.8" y="4.8" width="2.400" height="2.400"/><rect x="9.6" y="4.8" width="2.400" height="2.400"/><rect x="2.4" y="7.199999999999999" width="2.400" height="2.400"/><rect x="7.199999999999999" y="7.199999999999999" width="2.400" height="2.400"/><rect x="0.0" y="9.6" width="2.400" height="2.400"/><rect x="4.8" y="9.6" width="2.400" height="2.400"/><rect x="9.6" y="9.6" width="2.400" height="2.400"/></svg><div class="t" style="left:58px;top:11px;font-size:16px;line-height:17px;color:#c9ccd9">叠加2</div></div><div style="left:0;top:263px;width:199px;height:61px;background:#12151f;overflow:hidden"><div style="left:1px;top:1px;width:197px;height:59.6px;background:#242b41"></div><div style="left:50px;top:3px;width:1px;height:55px;background:#1a2032"></div><svg style="left:7px;top:25px" width="21" height="13" viewBox="0 0 21 13"><rect x="0" y="0.300" width="14.500" height="12.200" rx="2" fill="#c9ccd9"/><path d="M15.500 4.500l4.800-3.200v10.400l-4.800-3.200z" fill="#c9ccd9"/><text x="7.200" y="10.200" text-anchor="middle" font-family="Liberation Sans" font-weight="bold" font-size="10" fill="#242b41">3</text></svg><svg style="left:64px;top:35px" width="13" height="13" viewBox="0 0 13 13"><g fill="none" stroke="#4e5d80" stroke-width="1.500" stroke-linecap="round"><path d="M5.500 7.500a2.600 2.600 0 0 0 3.700 0l2-2a2.600 2.600 0 0 0-3.700-3.700l-0.800 0.800"/><path d="M7.500 5.500a2.600 2.600 0 0 0-3.700 0l-2 2a2.600 2.600 0 0 0 3.700 3.700l0.800-0.800"/></g></svg><svg style="left:110px;top:35px" width="18" height="13" viewBox="0 0 16.500 13" preserveAspectRatio="none"><path d="M0.500 4h3l4-3.500v12l-4-3.500h-3z" fill="#c9ccd9"/><g fill="none" stroke="#c9ccd9" stroke-width="1.300"><path d="M9.500 4a3.500 3.500 0 0 1 0 5M12 1.500a7 7 0 0 1 0 10"/></g></svg><svg style="left:161px;top:33px" width="12" height="12" viewBox="0 0 12 12" fill="#c9ccd9"><rect x="0.0" y="0.0" width="2.400" height="2.400"/><rect x="4.8" y="0.0" width="2.400" height="2.400"/><rect x="9.6" y="0.0" width="2.400" height="2.400"/><rect x="2.4" y="2.4" width="2.400" height="2.400"/><rect x="7.199999999999999" y="2.4" width="2.400" height="2.400"/><rect x="0.0" y="4.8" width="2.400" height="2.400"/><rect x="4.8" y="4.8" width="2.400" height="2.400"/><rect x="9.6" y="4.8" width="2.400" height="2.400"/><rect x="2.4" y="7.199999999999999" width="2.400" height="2.400"/><rect x="7.199999999999999" y="7.199999999999999" width="2.400" height="2.400"/><rect x="0.0" y="9.6" width="2.400" height="2.400"/><rect x="4.8" y="9.6" width="2.400" height="2.400"/><rect x="9.6" y="9.6" width="2.400" height="2.400"/></svg><div class="t" style="left:58px;top:11px;font-size:16px;line-height:17px;color:#c9ccd9">叠加3</div></div><div style="left:0;top:324px;width:199px;height:61px;background:#12151f;overflow:hidden"><div style="left:1px;top:1px;width:197px;height:59.6px;background:#242b41"></div><div style="left:50px;top:3px;width:1px;height:55px;background:#1a2032"></div><svg style="left:7px;top:25px" width="21" height="13" viewBox="0 0 21 13"><rect x="0" y="0.300" width="14.500" height="12.200" rx="2" fill="#c9ccd9"/><path d="M15.500 4.500l4.800-3.200v10.400l-4.800-3.200z" fill="#c9ccd9"/><text x="7.200" y="10.200" text-anchor="middle" font-family="Liberation Sans" font-weight="bold" font-size="10" fill="#242b41">4</text></svg><svg style="left:64px;top:35px" width="13" height="13" viewBox="0 0 13 13"><g fill="none" stroke="#4e5d80" stroke-width="1.500" stroke-linecap="round"><path d="M5.500 7.500a2.600 2.600 0 0 0 3.700 0l2-2a2.600 2.600 0 0 0-3.700-3.700l-0.800 0.800"/><path d="M7.500 5.500a2.600 2.600 0 0 0-3.700 0l-2 2a2.600 2.600 0 0 0 3.700 3.700l0.800-0.800"/></g></svg><svg style="left:110px;top:35px" width="18" height="13" viewBox="0 0 16.500 13" preserveAspectRatio="none"><path d="M0.500 4h3l4-3.500v12l-4-3.500h-3z" fill="#c9ccd9"/><g fill="none" stroke="#c9ccd9" stroke-width="1.300"><path d="M9.500 4a3.500 3.500 0 0 1 0 5M12 1.500a7 7 0 0 1 0 10"/></g></svg><svg style="left:161px;top:33px" width="12" height="12" viewBox="0 0 12 12" fill="#c9ccd9"><rect x="0.0" y="0.0" width="2.400" height="2.400"/><rect x="4.8" y="0.0" width="2.400" height="2.400"/><rect x="9.6" y="0.0" width="2.400" height="2.400"/><rect x="2.4" y="2.4" width="2.400" height="2.400"/><rect x="7.199999999999999" y="2.4" width="2.400" height="2.400"/><rect x="0.0" y="4.8" width="2.400" height="2.400"/><rect x="4.8" y="4.8" width="2.400" height="2.400"/><rect x="9.6" y="4.8" width="2.400" height="2.400"/><rect x="2.4" y="7.199999999999999" width="2.400" height="2.400"/><rect x="7.199999999999999" y="7.199999999999999" width="2.400" height="2.400"/><rect x="0.0" y="9.6" width="2.400" height="2.400"/><rect x="4.8" y="9.6" width="2.400" height="2.400"/><rect x="9.6" y="9.6" width="2.400" height="2.400"/></svg><div class="t" style="left:58px;top:11px;font-size:16px;line-height:17px;color:#c9ccd9">叠加4</div></div><div style="left:0;top:385px;width:199px;height:61px;background:#12151f;overflow:hidden"><div style="left:1px;top:1px;width:197px;height:59.6px;background:#242b41"></div><div style="left:50px;top:3px;width:1px;height:55px;background:#1a2032"></div><svg style="left:7px;top:25px" width="21" height="13" viewBox="0 0 21 13"><rect x="0" y="0.300" width="14.500" height="12.200" rx="2" fill="#c9ccd9"/><path d="M15.500 4.500l4.800-3.200v10.400l-4.800-3.200z" fill="#c9ccd9"/><text x="7.200" y="10.200" text-anchor="middle" font-family="Liberation Sans" font-weight="bold" font-size="10" fill="#242b41">5</text></svg><svg style="left:64px;top:35px" width="13" height="13" viewBox="0 0 13 13"><g fill="none" stroke="#4e5d80" stroke-width="1.500" stroke-linecap="round"><path d="M5.500 7.500a2.600 2.600 0 0 0 3.700 0l2-2a2.600 2.600 0 0 0-3.700-3.700l-0.800 0.800"/><path d="M7.500 5.500a2.600 2.600 0 0 0-3.700 0l-2 2a2.600 2.600 0 0 0 3.700 3.700l0.800-0.800"/></g></svg><svg style="left:110px;top:35px" width="18" height="13" viewBox="0 0 16.500 13" preserveAspectRatio="none"><path d="M0.500 4h3l4-3.500v12l-4-3.500h-3z" fill="#c9ccd9"/><g fill="none" stroke="#c9ccd9" stroke-width="1.300"><path d="M9.500 4a3.500 3.500 0 0 1 0 5M12 1.500a7 7 0 0 1 0 10"/></g></svg><svg style="left:161px;top:33px" width="12" height="12" viewBox="0 0 12 12" fill="#c9ccd9"><rect x="0.0" y="0.0" width="2.400" height="2.400"/><rect x="4.8" y="0.0" width="2.400" height="2.400"/><rect x="9.6" y="0.0" width="2.400" height="2.400"/><rect x="2.4" y="2.4" width="2.400" height="2.400"/><rect x="7.199999999999999" y="2.4" width="2.400" height="2.400"/><rect x="0.0" y="4.8" width="2.400" height="2.400"/><rect x="4.8" y="4.8" width="2.400" height="2.400"/><rect x="9.6" y="4.8" width="2.400" height="2.400"/><rect x="2.4" y="7.199999999999999" width="2.400" height="2.400"/><rect x="7.199999999999999" y="7.199999999999999" width="2.400" height="2.400"/><rect x="0.0" y="9.6" width="2.400" height="2.400"/><rect x="4.8" y="9.6" width="2.400" height="2.400"/><rect x="9.6" y="9.6" width="2.400" height="2.400"/></svg><div class="t" style="left:58px;top:11px;font-size:16px;line-height:17px;color:#c9ccd9">叠加5</div></div><div style="left:0;top:446px;width:199px;height:18px;background:#12151f;overflow:hidden"><div style="left:1px;top:1px;width:197px;height:16.6px;background:#242b41"></div><div style="left:50px;top:3px;width:1px;height:12px;background:#1a2032"></div><div class="t" style="left:58px;top:5px;font-size:16px;line-height:17px;color:#c9ccd9">标题1</div></div><div style="left:1896px;top:80px;width:24px;height:384px;background:#242b41"></div><div style="left:1905px;top:101px;width:7px;height:197px;background:#2f3a5c"></div><svg style="left:1903px;top:84px" width="10" height="6" viewBox="0 0 10 6" ><path d="M0 6h10l-5-6z" fill="#c9ccd9"/></svg><svg style="left:1903px;top:453px" width="10" height="6" viewBox="0 0 10 6" ><path d="M0 0h10l-5 6z" fill="#c9ccd9"/></svg><div style="left:0;top:463.5px;width:1920px;height:25px;background:#242b41"></div><div style="left:83px;top:471px;width:25px;height:11px;border-radius:2px;background:#2b344f"></div><svg style="left:87px;top:473px" width="17" height="7" viewBox="0 0 17 7" ><path d="M0.500 4.500h3M2 3v3M5 1h5M7.500 1v5.500M9 6.500h4M11 5v1.500M14 4.500h3M15.500 3v3" stroke="#0aa8ff" stroke-width="1" fill="none"/></svg><svg style="left:122px;top:472px" width="6" height="9" viewBox="0 0 6 9" ><path d="M6 0v9l-6-4.500z" fill="#c9ccd9"/></svg><svg style="left:144px;top:472px" width="6" height="9" viewBox="0 0 6 9" ><path d="M0 0v9l6-4.500z" fill="#c9ccd9"/></svg><div style="left:166px;top:471px;width:208px;height:7px;background:#2f3a5c"></div></div>
<!--TLEND-->
<!--BOTTOM-->
<div style="left:0;top:1030px;width:1920px;height:8px;background:linear-gradient(90deg,#223f44 0,#24474a 30%,#20424a 50%,#1e3a4a 65%,#1b2c48 85%,#1a2846 100%)"></div>
<div style="left:60px;top:1030px;width:360px;height:8px;background:#f4f4f4"></div>
<div style="left:610px;top:1030px;width:61px;height:8px;background:#4a6468"></div>
<svg style="left:345px;top:1030px" width="45" height="8" viewBox="0 0 45 8"><path d="M3 5l6-2.500M30 4l8-4" stroke="#111" stroke-width="1.500"/></svg>
</div>
</body>
</html>
